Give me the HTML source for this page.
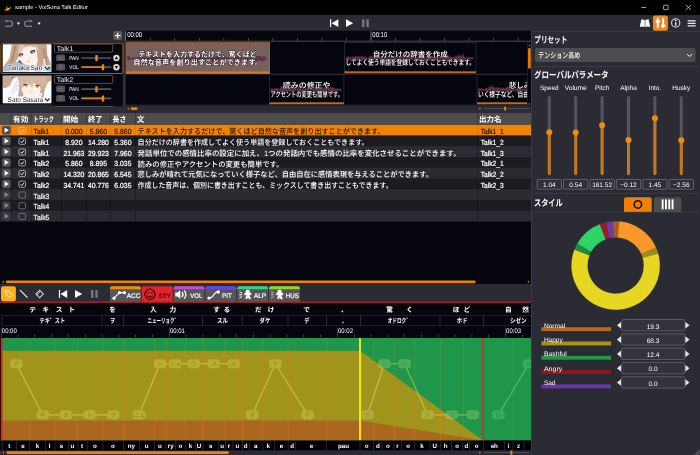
<!DOCTYPE html>
<html lang="ja"><head><meta charset="utf-8"><title>sample - VoiSona Talk Editor</title>
<style>
html,body{margin:0;padding:0;background:#000;overflow:hidden}
svg{display:block;font-family:'Liberation Sans', 'Noto Sans CJK JP', sans-serif;will-change:transform}
text{white-space:pre;text-rendering:geometricPrecision}
</style></head><body>
<svg width="700" height="455" viewBox="0 0 700 455">
<rect x="0" y="0" width="700" height="455" fill="#2a2b33"/>
<rect x="0" y="0" width="700" height="15" fill="#000"/>
<defs><linearGradient id="lg1" x1="0" y1="0" x2="0" y2="1"><stop offset="0" stop-color="#e6c21e"/><stop offset="0.55" stop-color="#f0a012"/><stop offset="1" stop-color="#ee7a0c"/></linearGradient></defs>
<path d="M8 3.9 C6.5 5.2 6.7 6.5 7.4 7.4 C7.9 8 8.5 8 9.1 7.7 L11.8 7 L10 8.7 C9.4 9.8 8.2 10.7 6.5 10.7 C5.5 10.7 4.7 10 4.8 8.9 C5.6 9.4 6.5 9.1 6.8 8.3 C6.1 7 6.2 5.3 8 3.9 Z" fill="url(#lg1)"/>
<text x="15" y="9.4" font-size="5.7" fill="#fff" textLength="73" lengthAdjust="spacingAndGlyphs">sample - VoiSona Talk Editor</text>
<line x1="641.4" y1="7.5" x2="646" y2="7.5" stroke="#e8e8e8" stroke-width="0.7"/>
<rect x="663.6" y="5.2" width="4.5" height="4.5" fill="none" rx="0.6" stroke="#e8e8e8" stroke-width="0.7"/>
<line x1="685.8" y1="5" x2="691" y2="9.8" stroke="#e8e8e8" stroke-width="0.7"/>
<line x1="691" y1="5" x2="685.8" y2="9.8" stroke="#e8e8e8" stroke-width="0.7"/>
<path d="M6.5 21 H9.8 A2.7 2.7 0 0 1 9.8 26.4 H5" fill="none" stroke="#80808a" stroke-width="1.2"/>
<polygon points="4.3,21 7.2,19.4 7.2,22.6" fill="#80808a"/>
<polygon points="16.8,22.6 20,22.6 18.4,25" fill="#f0f0f0"/>
<path d="M30.6 21 H27.3 A2.7 2.7 0 0 0 27.3 26.4 H32.1" fill="none" stroke="#80808a" stroke-width="1.2"/>
<polygon points="32.8,21 29.9,19.4 29.9,22.6" fill="#80808a"/>
<polygon points="37.5,22.6 40.7,22.6 39.1,25" fill="#f0f0f0"/>
<rect x="330" y="19.3" width="1.2" height="7.7" fill="#fff"/>
<polygon points="338.3,19.3 338.3,27 331.6,23.15" fill="#fff"/>
<polygon points="346,19.3 346,27 353.2,23.15" fill="#fff"/>
<rect x="362.1" y="19.3" width="2.4" height="7.7" fill="#77777d"/>
<rect x="366.4" y="19.3" width="2.4" height="7.7" fill="#77777d"/>
<path d="M639.8 26.9 L641.3 19.6 Q643.5 19.2 644.7 20 L644.7 27 Q642.5 26.2 639.8 26.9 Z" fill="#fff"/>
<path d="M650.2 26.9 L648.7 19.6 Q646.5 19.2 645.3 20 L645.3 27 Q647.5 26.2 650.2 26.9 Z" fill="#fff"/>
<rect x="652.9" y="15.4" width="15" height="15.3" fill="#ee8a1e" rx="2"/>
<rect x="656.9" y="18" width="1.9" height="9.9" fill="#fff"/>
<rect x="662.2" y="18" width="1.9" height="9.9" fill="#fff"/>
<rect x="655.7" y="20.3" width="4.3" height="2.4" fill="#fff" rx="1"/>
<rect x="661" y="24.5" width="4.3" height="2.4" fill="#fff" rx="1"/>
<circle cx="675.7" cy="22.9" r="4.1" fill="none" stroke="#fff" stroke-width="0.9"/>
<rect x="675.15" y="22.2" width="1.2" height="3.6" fill="#fff"/>
<circle cx="675.75" cy="20.6" r="0.8" fill="#fff"/>
<rect x="687.6" y="20.2" width="8" height="1.3" fill="#e6e6e6"/>
<rect x="687.6" y="22.7" width="8" height="1.3" fill="#e6e6e6"/>
<rect x="687.6" y="25.2" width="8" height="1.3" fill="#e6e6e6"/>
<rect x="113.3" y="31" width="8.8" height="9" fill="#5b5b5f" rx="2"/>
<rect x="114.9" y="35" width="5.6" height="1.1" fill="#fff"/>
<rect x="117.15" y="32.7" width="1.1" height="5.6" fill="#fff"/>
<rect x="125.7" y="30.7" width="405.3" height="10" fill="#05050e"/>
<rect x="125.7" y="40.7" width="405.3" height="1.3" fill="#34343b"/>
<rect x="125.3" y="31.2" width="0.8" height="9.5" fill="#8a8a90"/>
<rect x="149.88" y="38.2" width="0.7" height="2.5" fill="#6d6d74"/>
<rect x="174.41" y="38.2" width="0.7" height="2.5" fill="#6d6d74"/>
<rect x="198.94" y="38.2" width="0.7" height="2.5" fill="#6d6d74"/>
<rect x="223.47" y="38.2" width="0.7" height="2.5" fill="#6d6d74"/>
<rect x="248" y="38.2" width="0.7" height="2.5" fill="#6d6d74"/>
<rect x="272.53" y="38.2" width="0.7" height="2.5" fill="#6d6d74"/>
<rect x="297.06" y="38.2" width="0.7" height="2.5" fill="#6d6d74"/>
<rect x="321.59" y="38.2" width="0.7" height="2.5" fill="#6d6d74"/>
<rect x="346.12" y="38.2" width="0.7" height="2.5" fill="#6d6d74"/>
<rect x="370.6" y="31.2" width="0.8" height="9.5" fill="#8a8a90"/>
<rect x="395.18" y="38.2" width="0.7" height="2.5" fill="#6d6d74"/>
<rect x="419.71" y="38.2" width="0.7" height="2.5" fill="#6d6d74"/>
<rect x="444.24" y="38.2" width="0.7" height="2.5" fill="#6d6d74"/>
<rect x="468.77" y="38.2" width="0.7" height="2.5" fill="#6d6d74"/>
<rect x="493.3" y="38.2" width="0.7" height="2.5" fill="#6d6d74"/>
<rect x="517.83" y="38.2" width="0.7" height="2.5" fill="#6d6d74"/>
<text x="127.2" y="37.2" font-size="7.2" fill="#fff" textLength="15" lengthAdjust="spacingAndGlyphs">00:00</text>
<text x="372.3" y="37.2" font-size="7.2" fill="#fff" textLength="15" lengthAdjust="spacingAndGlyphs">00:10</text>
<rect x="0" y="42.3" width="123" height="62.1" fill="#07070f"/>
<rect x="52.6" y="104.4" width="70.4" height="1.8" fill="#07070f"/>
<rect x="123" y="42" width="2.7" height="64.4" fill="#30313a"/>
<rect x="125.7" y="42" width="405.3" height="63.5" fill="#05050e"/>
<rect x="125.7" y="73.6" width="401.5" height="0.9" fill="#2c2c34"/>
<rect x="125.7" y="104.6" width="401.5" height="0.9" fill="#2c2c34"/>
<rect x="527" y="42" width="0.7" height="63" fill="#2c2c34"/>
<defs><clipPath id="tlclip"><rect x="125.7" y="42" width="401.4" height="63.5"/></clipPath></defs>
<g clip-path="url(#tlclip)">
<rect x="125.7" y="42.7" width="143.75" height="30.8" fill="#78605b"/>
<path d="M127.7 56.47 V60.36 M128.5 56.2 V60.65 M129.3 56.56 V60.06 M130.1 57.06 V59.78 M130.9 57.81 V59.27 M131.7 58.03 V59.13 M132.5 57.65 V59.31 M133.3 57.49 V59.53 M134.1 57.7 V59.58 M134.9 57.43 V59.7 M135.7 57.39 V59.6 M136.5 57.3 V59.69 M137.3 57.72 V59.34 M138.1 57.65 V59.43 M138.9 56.72 V60.29 M139.7 57.15 V59.78 M140.5 57.61 V59.39 M141.3 56.79 V60.12 M142.1 56.96 V59.88 M142.9 57.28 V59.56 M143.7 56.85 V60.01 M144.5 56.78 V59.94 M145.3 56.7 V60.15 M146.1 56.95 V59.86 M146.9 57.11 V59.99 M147.7 57.73 V59.31 M148.5 57.31 V59.95 M149.3 56.69 V60.11 M150.1 55.6 V61.14 M150.9 56.73 V60.12 M151.7 56.4 V60.85 M152.5 57.32 V59.98 M153.3 56.65 V60.74 M154.1 57.38 V59.55 M154.9 57.41 V59.49 M155.7 56.89 V60.65 M156.5 56.28 V60.41 M157.3 56.16 V60.65 M158.1 57.15 V59.83 M158.9 57.56 V59.37 M159.7 57.94 V59.19 M160.5 58.01 V58.96 M161.3 57.1 V59.52 M162.1 57.46 V59.8 M162.9 56.67 V60.25 M163.7 56.8 V60.25 M164.5 57.66 V59.29 M165.3 58.04 V58.85 M166.1 57.88 V59.14 M166.9 57.32 V59.93 M167.7 56.85 V59.9 M168.5 57.23 V60.05 M169.3 56.61 V60.35 M170.1 57.32 V59.49 M170.9 57.47 V59.87 M171.7 55.74 V60.84 M172.5 56.02 V60.66 M173.3 56.61 V60.28 M174.1 56.84 V60 M174.9 56.56 V60.31 M175.7 56.91 V59.68 M176.5 57.06 V59.96 M177.3 56.66 V60.49 M178.1 56.23 V60.52 M178.9 57.47 V59.73 M179.7 57.55 V59.3 M180.5 57.21 V59.54 M181.3 58.09 V58.86 M182.1 58.14 V58.85 M182.9 58 V59.06 M183.7 57.88 V59.06 M184.5 56.98 V60.02 M185.3 57.77 V59.35 M186.1 56.97 V60.11 M186.9 57.04 V60.12 M187.7 56.98 V59.93 M188.5 56.11 V60.5 M189.3 55.25 V62.08 M190.1 56.06 V60.96 M190.9 55.91 V61.13 M191.7 56.68 V60.47 M192.5 56.57 V60.19 M193.3 57.76 V59.19 M194.1 57.04 V59.97 M194.9 56.47 V60.92 M195.7 56.02 V60.43 M196.5 55.98 V60.44 M197.3 55.92 V61.7 M198.1 55.4 V61.11 M198.9 56.86 V60.37 M199.7 56.14 V60.31 M200.5 55.88 V61.44 M201.3 55.38 V61.73 M202.1 56.04 V60.92 M202.9 57.48 V59.42 M203.7 57.29 V59.55 M204.5 57.76 V59.2 M205.3 57.18 V59.97 M206.1 57.14 V59.83 M206.9 57.48 V59.79 M207.7 57.21 V59.56 M208.5 57.68 V59.32 M209.3 57.63 V59.25 M210.1 57.03 V59.78 M210.9 57.12 V59.86 M211.7 55.49 V61.78 M212.5 55.16 V62.17 M213.3 55.7 V61.51 M214.1 55.12 V61.89 M214.9 56.53 V60.07 M215.7 56.83 V60.39 M216.5 56.21 V60.87 M217.3 55.84 V61.3 M218.1 55.89 V61.14 M218.9 55.77 V61.27 M219.7 56.13 V60.55 M220.5 57.65 V59.47 M221.3 57.74 V59.45 M222.1 57.43 V59.63 M222.9 57.56 V59.23 M223.7 56.52 V60.36 M224.5 57.21 V59.81 M225.3 57.43 V59.59 M226.1 57.02 V59.85 M226.9 56.87 V59.84 M227.7 57.12 V59.75 M228.5 57.38 V59.97 M229.3 56.49 V60.91 M230.1 57.04 V60.07 M230.9 56.98 V59.65 M231.7 56.94 V59.82 M232.5 55.67 V61.55 M233.3 56.62 V60.57 M234.1 56.42 V60.34 M234.9 56 V61.02 M235.7 56.52 V60.45 M236.5 56.14 V60.71 M237.3 56.67 V60.21 M238.1 55.82 V61.86 M238.9 55.37 V61.44 M239.7 55.63 V61.79 M240.5 56.5 V60.64 M241.3 57.12 V59.62 M242.1 57.53 V59.42 M242.9 57.86 V59.12 M243.7 57.27 V59.62 M244.5 57.13 V60.04 M245.3 54.92 V62.02 M246.1 54.97 V61.47 M246.9 55.75 V61.59 M247.7 56.86 V60.05 M248.5 57.9 V59.06 M249.3 58.27 V58.73 M250.1 57.85 V59.09 M250.9 56.87 V60.06 M251.7 56.56 V60.37 M252.5 56.18 V60.65 M253.3 56.57 V60.62 M254.1 55.66 V61.27 M254.9 55.3 V61.43 M255.7 56.06 V61.07 M256.5 55.92 V61.79 M257.3 55.84 V60.76 M258.1 55.87 V60.86 M258.9 56.65 V59.96 M259.7 55.93 V60.87 M260.5 56.11 V60.82 M261.3 56.74 V60.73 M262.1 56.76 V60.78 M262.9 56.25 V60.87 M263.7 56.35 V61.07 M264.5 56.25 V60.36 M265.3 57.13 V60.04 M266.1 57.62 V59.4" fill="none" stroke="#55294c" stroke-width="0.8"/>
<rect x="125.7" y="42.7" width="143.75" height="30.8" fill="none" stroke="#b8702a" stroke-width="0.8"/>
<rect x="125.7" y="71.5" width="143.75" height="2" fill="#e07a18"/>
<text x="197.57" y="56.9" font-size="7.5" fill="#fff" font-weight="700" textLength="118.5" lengthAdjust="spacingAndGlyphs" stroke="#120a10" stroke-width="0.9" stroke-linejoin="round" paint-order="stroke" text-anchor="middle">テキストを入力するだけで、驚くほど</text>
<text x="197.57" y="65.3" font-size="7.5" fill="#fff" font-weight="700" textLength="128.5" lengthAdjust="spacingAndGlyphs" stroke="#120a10" stroke-width="0.9" stroke-linejoin="round" paint-order="stroke" text-anchor="middle">自然な音声を創り出すことができます。</text>
<rect x="344.51" y="42.7" width="131.48" height="30.8" fill="#04040c" stroke="#2e2e36" stroke-width="0.8"/>
<path d="M346.01 57.24 V59.47 M346.81 56.97 V59.9 M347.61 56.79 V59.94 M348.41 56.41 V60.2 M349.21 57.13 V59.64 M350.01 56.59 V60.61 M350.81 57.46 V59.22 M351.61 57.29 V59.25 M352.41 56.66 V59.81 M353.21 56.86 V59.72 M354.01 56.62 V60.43 M354.81 56.96 V59.55 M355.61 55.9 V61.65 M356.41 56.84 V60.29 M357.21 56.52 V60.66 M358.01 56.3 V61.33 M358.81 56.96 V60.03 M359.61 56.28 V60.09 M360.41 57.45 V59.52 M361.21 56.2 V60.72 M362.01 55.72 V60.95 M362.81 56.52 V60.6 M363.61 56.88 V60.14 M364.41 56.39 V60.78 M365.21 57.08 V59.55 M366.01 57.13 V59.84 M366.81 57.88 V59.04 M367.61 57.75 V59.04 M368.41 57.46 V59.55 M369.21 56.19 V60.58 M370.01 55.74 V61.29 M370.81 56.56 V60.26 M371.61 55.74 V60.67 M372.41 56.81 V59.7 M373.21 57.62 V59.1 M374.01 56.99 V59.74 M374.81 57.39 V59.41 M375.61 56.85 V59.87 M376.41 56.88 V60.34 M377.21 56.3 V60.29 M378.01 57.08 V59.48 M378.81 57.39 V59.29 M379.61 57.71 V58.99 M380.41 57.16 V59.52 M381.21 57.29 V59.3 M382.01 57.67 V58.99 M382.81 57.34 V59.4 M383.61 57.56 V59.23 M384.41 57.01 V60 M385.21 57.34 V59.5 M386.01 56.45 V60.9 M386.81 57.11 V59.61 M387.61 56.84 V59.78 M388.41 57.63 V59.15 M389.21 57.1 V59.84 M390.01 57.63 V59.38 M390.81 56.97 V59.73 M391.61 57.26 V59.68 M392.41 57.28 V59.5 M393.21 56.59 V60.28 M394.01 57.13 V59.64 M394.81 57.13 V59.75 M395.61 56.2 V60.38 M396.41 56.35 V60.67 M397.21 55.91 V61.17 M398.01 57.2 V60 M398.81 55.52 V60.78 M399.61 57.02 V60.01 M400.41 56.04 V60.84 M401.21 56.58 V60.48 M402.01 55.47 V61.84 M402.81 55.16 V62.44 M403.61 55.21 V61.27 M404.41 54.01 V62.5 M405.21 56.54 V59.98 M406.01 55.73 V60.48 M406.81 56.12 V60.62 M407.61 55.15 V61.42 M408.41 55.77 V60.53 M409.21 55.93 V60.95 M410.01 56.69 V60.38 M410.81 57.4 V59.5 M411.61 57.53 V59.44 M412.41 56.81 V59.87 M413.21 56.98 V60.38 M414.01 56.64 V60.34 M414.81 56.88 V60.37 M415.61 56.79 V60.36 M416.41 56.58 V60.66 M417.21 56.66 V60.03 M418.01 56.22 V60.51 M418.81 55.85 V60.26 M419.61 56.62 V60.4 M420.41 55.04 V61.47 M421.21 55.73 V61 M422.01 56.61 V60.23 M422.81 56.57 V60.66 M423.61 56.09 V60.94 M424.41 55.18 V60.89 M425.21 56.55 V60.31 M426.01 56.53 V60.7 M426.81 55.1 V61.91 M427.61 56.37 V60.74 M428.41 56.71 V59.99 M429.21 56.7 V59.66 M430.01 56.45 V60.6 M430.81 55.63 V60.93 M431.61 55.74 V61.65 M432.41 56.04 V61.02 M433.21 55.38 V61.09 M434.01 56.86 V59.82 M434.81 56.98 V59.45 M435.61 56.52 V60.27 M436.41 56.71 V60.36 M437.21 56.35 V60.34 M438.01 54.14 V62.03 M438.81 55.32 V60.91 M439.61 57.32 V59.46 M440.41 56.37 V60.42 M441.21 55.77 V61.62 M442.01 55.64 V61.59 M442.81 55.94 V60.9 M443.61 56.23 V60.75 M444.41 56.39 V60.49 M445.21 55.51 V61.5 M446.01 56.32 V60.51 M446.81 56.14 V60.47 M447.61 55.01 V61.95 M448.41 55.51 V62.18 M449.21 57.09 V59.89 M450.01 56.58 V60.2 M450.81 56.84 V60.02 M451.61 56.98 V59.62 M452.41 56.83 V59.71 M453.21 56.78 V59.61 M454.01 57.21 V59.61 M454.81 56.47 V60.4 M455.61 56.47 V60.61 M456.41 55.96 V61.19 M457.21 56.63 V60.68 M458.01 55.29 V60.87 M458.81 55.22 V61.07 M459.61 55.34 V61.23 M460.41 55.72 V61.17 M461.21 56.3 V60.91 M462.01 55.42 V61.33 M462.81 53.59 V63 M463.61 55.75 V61.16 M464.41 57.11 V60.16 M465.21 57.11 V59.59 M466.01 57.39 V59.51 M466.81 57.43 V59.41 M467.61 57.5 V59.29 M468.41 57.15 V60.11 M469.21 57.1 V60.16 M470.01 57.29 V59.55 M470.81 57.43 V59.21 M471.61 57.34 V59.43 M472.41 57.3 V59.57 M473.21 57.81 V58.91" fill="none" stroke="#7a3d5a" stroke-width="0.8"/>
<rect x="344.51" y="71.3" width="131.48" height="1.8" fill="#c9641c"/>
<text x="410.25" y="56.9" font-size="7.5" fill="#fff" font-weight="500" textLength="75" lengthAdjust="spacingAndGlyphs" stroke="#120a10" stroke-width="0.9" stroke-linejoin="round" paint-order="stroke" text-anchor="middle">自分だけの辞書を作成</text>
<text x="410.25" y="65.3" font-size="7.5" fill="#fff" font-weight="500" textLength="129.48" lengthAdjust="spacingAndGlyphs" stroke="#120a10" stroke-width="0.9" stroke-linejoin="round" paint-order="stroke" text-anchor="middle">してよく使う単語を登録しておくこともできます。</text>
<rect x="664.45" y="42.7" width="195.26" height="30.8" fill="#04040c" stroke="#2e2e36" stroke-width="0.8"/>
<path d="M665.95 55.6 V61.15 M666.75 55.48 V61.64 M667.55 55.87 V61.19 M668.35 56.66 V60.58 M669.15 56.35 V60.07 M669.95 56.87 V59.63 M670.75 56.69 V59.78 M671.55 56.53 V60.42 M672.35 56.6 V60.22 M673.15 57.34 V59.73 M673.95 56.01 V60.98 M674.75 56.58 V60.25 M675.55 57.08 V59.83 M676.35 57.29 V59.67 M677.15 57.15 V59.72 M677.95 56.33 V60.95 M678.75 56.3 V60.71 M679.55 55.91 V61.11 M680.35 56.76 V59.83 M681.15 57 V59.9 M681.95 56.27 V60.24 M682.75 56.95 V60.09 M683.55 56.29 V60.54 M684.35 56.47 V60.72 M685.15 54.92 V61.37 M685.95 56.57 V60.58 M686.75 56.46 V60.39 M687.55 56.49 V60.67 M688.35 57.38 V59.82 M689.15 56.53 V59.96 M689.95 56.63 V59.78 M690.75 56.72 V59.99 M691.55 57.24 V59.59 M692.35 57.68 V59.28 M693.15 57.64 V58.98 M693.95 56.94 V59.97 M694.75 56.46 V60.15 M695.55 57.49 V59.14 M696.35 57.43 V59.33 M697.15 57.63 V59.09 M697.95 57.96 V58.94 M698.75 57.44 V59.23 M699.55 57.44 V59.46 M700.35 57.19 V59.67 M701.15 56.34 V59.92 M701.95 56.78 V59.61 M702.75 57.66 V59.22 M703.55 57.81 V59.05 M704.35 57.92 V58.89 M705.15 57.6 V59.5 M705.95 56.46 V60.67 M706.75 56.58 V60.24 M707.55 55.35 V61.22 M708.35 56.29 V60.35 M709.15 55.02 V61.4 M709.95 56.66 V60.28 M710.75 55.34 V61.07 M711.55 55.64 V60.98 M712.35 56.7 V60.23 M713.15 56.44 V60.21 M713.95 56.85 V60.04 M714.75 57.26 V59.54 M715.55 56.17 V60.25 M716.35 56.65 V59.86 M717.15 57.42 V59.66 M717.95 55.99 V60.74 M718.75 55.57 V61.07 M719.55 56.86 V59.64 M720.35 57.2 V59.32 M721.15 57.93 V59.02 M721.95 58.17 V58.71 M722.75 57.99 V58.78 M723.55 57.28 V59.39 M724.35 57.31 V59.83 M725.15 56.94 V59.57 M725.95 56.25 V59.98 M726.75 56.91 V60.02 M727.55 57.23 V59.6 M728.35 56.65 V59.94 M729.15 57.35 V59.43 M729.95 57.23 V59.77 M730.75 55.78 V61.34 M731.55 56.78 V60.06 M732.35 56.58 V60.2 M733.15 57.22 V59.31 M733.95 57.89 V58.94 M734.75 57.44 V59.45 M735.55 57.51 V59.26 M736.35 56.86 V59.89 M737.15 56.07 V60.26 M737.95 56.33 V60.8 M738.75 56.63 V60.13 M739.55 57.36 V59.4 M740.35 57.41 V59.38 M741.15 57.05 V60.21 M741.95 56.75 V59.98 M742.75 55.92 V60.67 M743.55 56.6 V60.28 M744.35 57 V59.9 M745.15 57.46 V59.34 M745.95 56.67 V60.29 M746.75 56.42 V60.34 M747.55 56.95 V60.15 M748.35 55.23 V60.94 M749.15 55.72 V61.2 M749.95 56.21 V60.6 M750.75 56.08 V60.78 M751.55 56.25 V60.07 M752.35 56.59 V60.24 M753.15 56.61 V60.42 M753.95 56.32 V60.17 M754.75 56.54 V59.92 M755.55 55.57 V60.52 M756.35 56.32 V60.79 M757.15 56.93 V60.08 M757.95 56.52 V59.96 M758.75 55.52 V61.03 M759.55 56.13 V61.03 M760.35 55.68 V61.09 M761.15 55.74 V61.55 M761.95 55.88 V61.63 M762.75 56.36 V61.11 M763.55 57.34 V59.61 M764.35 56.49 V60.37 M765.15 56.55 V60.15 M765.95 56.75 V60.07 M766.75 55.69 V60.77 M767.55 56.48 V60.67 M768.35 56.88 V59.78 M769.15 55.98 V60.8 M769.95 56.68 V60.26 M770.75 56 V60.24 M771.55 56.38 V60.43 M772.35 54.59 V61.54 M773.15 56.5 V60.53 M773.95 55.78 V60.89 M774.75 57.5 V59.23 M775.55 57.65 V59.05 M776.35 57.43 V59.14 M777.15 55.7 V61.15 M777.95 55.97 V60.86 M778.75 54.85 V61.64 M779.55 56.25 V60.3 M780.35 56.75 V59.66 M781.15 56.28 V60.4 M781.95 56.18 V60.41 M782.75 56.1 V61.15 M783.55 55.14 V61.8 M784.35 53.72 V61.99 M785.15 54.77 V61.33 M785.95 56.43 V60.25 M786.75 56.15 V60.23 M787.55 55.36 V60.88 M788.35 55.23 V61.92 M789.15 55.95 V60.53 M789.95 56.74 V60.03 M790.75 57.85 V58.9 M791.55 58.18 V58.62 M792.35 58.15 V58.69 M793.15 57.91 V58.87 M793.95 57.62 V59.23 M794.75 57.11 V59.58 M795.55 56.48 V60.09 M796.35 57.14 V59.69 M797.15 57.65 V59.22 M797.95 57.4 V59.53 M798.75 57.37 V59.41 M799.55 56.7 V60 M800.35 56.81 V60.2 M801.15 56.85 V60.23 M801.95 55.71 V60.51 M802.75 56.35 V60.18 M803.55 56.2 V60.5 M804.35 56.38 V60.79 M805.15 56.29 V60.45 M805.95 55.17 V62.26 M806.75 55.07 V61.09 M807.55 56.39 V60.83 M808.35 56.06 V60.52 M809.15 56.12 V60.42 M809.95 57.29 V59.54 M810.75 56.68 V60.13 M811.55 54.75 V61.26 M812.35 55.13 V62.05 M813.15 55.87 V60.23 M813.95 57.58 V59.31 M814.75 58.14 V58.72 M815.55 58.15 V58.65 M816.35 57.92 V58.77 M817.15 57.6 V59.22 M817.95 56.89 V59.65 M818.75 56.77 V60.38 M819.55 56.39 V60.33 M820.35 56.07 V60.81 M821.15 56.94 V59.69 M821.95 56.5 V60.66 M822.75 55.52 V60.72 M823.55 56.2 V60.47 M824.35 54.75 V61.57 M825.15 55.01 V61.35 M825.95 56.73 V60.29 M826.75 56.25 V60.95 M827.55 57.51 V59.5 M828.35 57.64 V59.19 M829.15 57.12 V59.43 M829.95 57.11 V59.4 M830.75 56.87 V60.13 M831.55 56.74 V59.92 M832.35 57.65 V59.12 M833.15 56.83 V59.92 M833.95 56.17 V61.25 M834.75 56.9 V59.77 M835.55 55.14 V61.69 M836.35 54.75 V61.45 M837.15 55.5 V60.95 M837.95 54.97 V62.09 M838.75 56.49 V60.26 M839.55 56.31 V60.72 M840.35 56.84 V60.27 M841.15 56.01 V60.99 M841.95 56.25 V60.66 M842.75 55.53 V61.37 M843.55 57.11 V59.66 M844.35 55.74 V61.19 M845.15 56.18 V60.86 M845.95 57.17 V59.87 M846.75 56.75 V59.82 M847.55 56.74 V60.41 M848.35 56.42 V60.87 M849.15 57.34 V59.73 M849.95 57.19 V59.67 M850.75 57.62 V59.06 M851.55 57.51 V59.42 M852.35 57.13 V59.58 M853.15 57.41 V59.27 M853.95 57.5 V59.29 M854.75 56.91 V59.84 M855.55 57.85 V58.99 M856.35 57.95 V58.86 M857.15 58.03 V58.71" fill="none" stroke="#7a3d5a" stroke-width="0.8"/>
<rect x="664.45" y="71.3" width="195.26" height="1.8" fill="#c9641c"/>
<text x="762.08" y="56.9" font-size="7.5" fill="#fff" font-weight="500" textLength="128" lengthAdjust="spacingAndGlyphs" stroke="#120a10" stroke-width="0.9" stroke-linejoin="round" paint-order="stroke" text-anchor="middle">発話単位での感情比率の設定に加え、</text>
<text x="762.08" y="65.3" font-size="7.5" fill="#fff" font-weight="500" textLength="193.26" lengthAdjust="spacingAndGlyphs" stroke="#120a10" stroke-width="0.9" stroke-linejoin="round" paint-order="stroke" text-anchor="middle">1つの発話内でも感情の比率を変化させることができます。</text>
<rect x="269.45" y="74.5" width="74.45" height="30" fill="#04040c" stroke="#2e2e36" stroke-width="0.8"/>
<path d="M270.95 88.21 V91.34 M271.75 88.45 V91.02 M272.55 88.65 V90.67 M273.35 89.08 V90.43 M274.15 88.77 V90.78 M274.95 88.26 V91.47 M275.75 88.64 V90.82 M276.55 88.34 V91.06 M277.35 88.05 V91.12 M278.15 89 V90.76 M278.95 88.72 V90.92 M279.75 88.84 V90.61 M280.55 87.38 V92.26 M281.35 86.53 V92.14 M282.15 87.07 V92.37 M282.95 86.64 V92.65 M283.75 86.59 V92.88 M284.55 87.81 V91.99 M285.35 87.46 V91.85 M286.15 88.73 V91.13 M286.95 87.74 V91.71 M287.75 86.16 V93.15 M288.55 88.41 V91.26 M289.35 87.98 V91.54 M290.15 88.56 V91.4 M290.95 88.43 V91.29 M291.75 87.21 V92 M292.55 87.73 V91.59 M293.35 87.52 V92.64 M294.15 86.81 V92.29 M294.95 88.38 V91.2 M295.75 88.55 V90.76 M296.55 89.12 V90.4 M297.35 88.15 V91.75 M298.15 87.29 V92.28 M298.95 87.58 V92.13 M299.75 86 V93.63 M300.55 87.94 V91.75 M301.35 88.3 V91.16 M302.15 88.94 V90.54 M302.95 88.38 V90.84 M303.75 88.02 V91.43 M304.55 88.83 V90.54 M305.35 87.76 V91.43 M306.15 88.65 V90.92 M306.95 87.85 V91.33 M307.75 88.85 V90.48 M308.55 88.49 V91.48 M309.35 87.86 V91.54 M310.15 87.97 V91.97 M310.95 88.13 V91.41 M311.75 88.14 V91.17 M312.55 88.74 V90.82 M313.35 87.94 V91.36 M314.15 88.4 V91.09 M314.95 88.5 V91.1 M315.75 88.28 V91.23 M316.55 87.15 V92.37 M317.35 87.19 V91.72 M318.15 88.33 V91.4 M318.95 88.04 V91.83 M319.75 87.44 V92.96 M320.55 87.98 V91.99 M321.35 87.29 V91.8 M322.15 87.57 V92.01 M322.95 88.51 V91.19 M323.75 87.35 V91.68 M324.55 87.94 V91.62 M325.35 86.94 V92.25 M326.15 87.35 V91.87 M326.95 85.87 V93.3 M327.75 86.6 V92.68 M328.55 86.55 V93.56 M329.35 87.71 V91.84 M330.15 87.28 V92.04 M330.95 86.68 V93.26 M331.75 88.05 V91.59 M332.55 86.84 V93.62 M333.35 87.62 V91.81 M334.15 88.06 V91.77 M334.95 88.21 V91.69 M335.75 88.85 V90.65 M336.55 88.88 V90.68 M337.35 88.11 V91.57 M338.15 88.91 V90.66 M338.95 88.54 V90.99 M339.75 88.79 V91.03 M340.55 88.96 V90.6 M341.35 89.21 V90.52" fill="none" stroke="#7a3d5a" stroke-width="0.8"/>
<rect x="269.45" y="102.3" width="74.45" height="1.8" fill="#c9641c"/>
<text x="306.67" y="88.3" font-size="7.5" fill="#fff" font-weight="500" textLength="47.6" lengthAdjust="spacingAndGlyphs" stroke="#120a10" stroke-width="0.9" stroke-linejoin="round" paint-order="stroke" text-anchor="middle">読みの修正や</text>
<text x="306.67" y="96.7" font-size="7.5" fill="#fff" font-weight="500" textLength="72.45" lengthAdjust="spacingAndGlyphs" stroke="#120a10" stroke-width="0.9" stroke-linejoin="round" paint-order="stroke" text-anchor="middle">アクセントの変更も簡単です。</text>
<rect x="476.97" y="74.5" width="160.55" height="30" fill="#04040c" stroke="#2e2e36" stroke-width="0.8"/>
<path d="M478.47 88.99 V90.7 M479.27 88.03 V91.95 M480.07 88.36 V91.25 M480.87 88.86 V90.77 M481.67 88.02 V91.13 M482.47 88.94 V90.54 M483.27 89.07 V90.63 M484.07 89.03 V90.56 M484.87 88.99 V90.39 M485.67 88.2 V91.04 M486.47 87.78 V91.62 M487.27 88.49 V91.29 M488.07 88.44 V90.93 M488.87 87.44 V92.05 M489.67 86.49 V93.15 M490.47 86.54 V92.84 M491.27 87.37 V92.45 M492.07 84.95 V94.16 M492.87 87.03 V92.31 M493.67 87.36 V92.31 M494.47 87.51 V92.09 M495.27 87.47 V92.2 M496.07 88.36 V91.04 M496.87 87.46 V92.08 M497.67 87.09 V92.27 M498.47 87.48 V92.65 M499.27 88.19 V91.3 M500.07 88.45 V91.22 M500.87 88.6 V91.04 M501.67 88.02 V91.91 M502.47 87.57 V92.24 M503.27 87.56 V92.04 M504.07 88.5 V91.14 M504.87 88.37 V91.24 M505.67 88.04 V91.99 M506.47 87.39 V92.01 M507.27 86.74 V92.73 M508.07 87.03 V92.73 M508.87 86.79 V92.38 M509.67 86.27 V92.63 M510.47 87.38 V92.06 M511.27 88.19 V91.33 M512.07 88.42 V91.43 M512.87 87.96 V91.62 M513.67 88.61 V90.66 M514.47 89.1 V90.53 M515.27 88.89 V90.58 M516.07 88.77 V90.65 M516.87 87.94 V91.82 M517.67 86.49 V92.69 M518.47 86.69 V92.63 M519.27 87.97 V91.61 M520.07 86.19 V93.02 M520.87 87.74 V91.29 M521.67 88.58 V91.04 M522.47 88.8 V90.89 M523.27 88.96 V90.58 M524.07 88.8 V90.62 M524.87 87.78 V91.62 M525.67 88.39 V91 M526.47 88.53 V91.39 M527.27 88.65 V91.04 M528.07 88.49 V91.03 M528.87 87.68 V91.95 M529.67 88.07 V91.38 M530.47 85.49 V93.36 M531.27 87.69 V92.61 M532.07 87.5 V91.99 M532.87 87.31 V92.4 M533.67 88.54 V90.87 M534.47 88.73 V90.86 M535.27 88.69 V90.87 M536.07 87.46 V91.7 M536.87 87.85 V92.07 M537.67 86.82 V92.23 M538.47 87.98 V91.72 M539.27 87.15 V92.31 M540.07 86.14 V93.46 M540.87 86.5 V93.23 M541.67 87.45 V92.9 M542.47 88.37 V91.15 M543.27 89.03 V90.39 M544.07 89.1 V90.49 M544.87 88.78 V91 M545.67 87.6 V92.15 M546.47 86.1 V93.35 M547.27 87.83 V91.94 M548.07 86.15 V92.67 M548.87 87.8 V92.13 M549.67 87.9 V91.34 M550.47 88.35 V90.91 M551.27 88.09 V91.36 M552.07 88.26 V91.38 M552.87 88.54 V91.05 M553.67 88.07 V91.61 M554.47 88.87 V90.69 M555.27 88.63 V91.15 M556.07 89.15 V90.63 M556.87 88.88 V90.68 M557.67 87.64 V92.01 M558.47 88.3 V91.15 M559.27 87.82 V91.52 M560.07 88.84 V90.89 M560.87 89.16 V90.43 M561.67 89.08 V90.38 M562.47 88.92 V90.58 M563.27 88.08 V91.42 M564.07 88.36 V91.66 M564.87 89 V90.86 M565.67 88.51 V91.03 M566.47 88.08 V91.61 M567.27 88.8 V90.71 M568.07 88.77 V90.94 M568.87 88.66 V90.84 M569.67 88.15 V91.54 M570.47 88.62 V90.86 M571.27 88.79 V90.87 M572.07 89.05 V90.53 M572.87 89.09 V90.76 M573.67 88.53 V90.76 M574.47 88.46 V91.03 M575.27 88.7 V90.75 M576.07 89.1 V90.56 M576.87 88.83 V90.55 M577.67 89.18 V90.4 M578.47 88.88 V90.81 M579.27 88.67 V90.74 M580.07 87.42 V92.17 M580.87 87.98 V91.16 M581.67 88.4 V91.4 M582.47 88.8 V90.82 M583.27 89.45 V90.13 M584.07 89.15 V90.33 M584.87 88.93 V90.61 M585.67 87.86 V91.39 M586.47 88.1 V91.65 M587.27 87.35 V92.73 M588.07 88.62 V91.34 M588.87 88.29 V91.63 M589.67 87.79 V91.69 M590.47 89.24 V90.55 M591.27 88.76 V90.56 M592.07 89.09 V90.61 M592.87 89.12 V90.52 M593.67 88.73 V90.86 M594.47 87.55 V92.34 M595.27 87.76 V91.52 M596.07 88.04 V91.88 M596.87 86.48 V93.41 M597.67 88.29 V91.64 M598.47 87.71 V91.75 M599.27 87.77 V91.95 M600.07 88.68 V91.07 M600.87 89.14 V90.51 M601.67 89.31 V90.3 M602.47 89 V90.58 M603.27 88.74 V91.01 M604.07 88.11 V91.37 M604.87 88.28 V91.42 M605.67 88.76 V90.74 M606.47 88.46 V91.36 M607.27 87.82 V91.63 M608.07 87.72 V91.79 M608.87 87.7 V92.11 M609.67 88.02 V91.33 M610.47 88.42 V91.05 M611.27 88.96 V90.67 M612.07 87.87 V91.56 M612.87 87.07 V92.03 M613.67 88.34 V91.39 M614.47 85.82 V93.37 M615.27 87.71 V91.84 M616.07 87.99 V92.05 M616.87 86.86 V92.14 M617.67 88.11 V91.85 M618.47 87.57 V91.93 M619.27 88.45 V91.46 M620.07 87.96 V91.65 M620.87 87.38 V91.92 M621.67 87.74 V91.52 M622.47 88.4 V91.02 M623.27 88.27 V91.68 M624.07 87.91 V91.4 M624.87 88.65 V90.92 M625.67 88.68 V91.08 M626.47 89.34 V90.24 M627.27 88.76 V90.84 M628.07 88.82 V90.69 M628.87 88.28 V91.07 M629.67 88.83 V91.01 M630.47 87.76 V92.33 M631.27 88.01 V91.7 M632.07 87.34 V91.93 M632.87 88.53 V91.11 M633.67 88.41 V91.15 M634.47 88.79 V90.84 M635.27 88.31 V91.14" fill="none" stroke="#7a3d5a" stroke-width="0.8"/>
<rect x="476.97" y="102.3" width="160.55" height="1.8" fill="#c9641c"/>
<text x="557.24" y="88.3" font-size="7.5" fill="#fff" font-weight="500" textLength="97" lengthAdjust="spacingAndGlyphs" stroke="#120a10" stroke-width="0.9" stroke-linejoin="round" paint-order="stroke" text-anchor="middle">悲しみが晴れて元気になって</text>
<text x="557.24" y="96.7" font-size="7.5" fill="#fff" font-weight="500" textLength="158.55" lengthAdjust="spacingAndGlyphs" stroke="#120a10" stroke-width="0.9" stroke-linejoin="round" paint-order="stroke" text-anchor="middle">いく様子など、自由自在に感情表現を与えることができます。</text>
</g>
<polygon points="528.4,46.2 530.4,46.2 529.4,44.6" fill="#ef8306"/>
<rect x="528.1" y="47.9" width="2.6" height="20.7" fill="#ef8306" rx="1.2"/>
<polygon points="528.4,103.6 530.4,103.6 529.4,105.2" fill="#ef8306"/>
<polygon points="128.9,107.6 128.9,109.8 127.2,108.7" fill="#ef8306"/>
<rect x="130.7" y="107.3" width="6.8" height="2.7" fill="#ef8306" rx="1.3"/>
<polygon points="479.3,107.6 479.3,109.8 481,108.7" fill="#ef8306"/>
<rect x="483.6" y="108.3" width="45.7" height="0.8" fill="#55565e"/>
<rect x="504.2" y="106.6" width="1.9" height="4.1" fill="#ef8306" rx="0.6"/>
<rect x="0.9" y="43.2" width="122" height="30.3" fill="none" rx="1.2" stroke="#b96a1c" stroke-width="0.9"/>
<rect x="2.8" y="44.5" width="48.4" height="27.6" fill="#fff"/>
<rect x="54.5" y="44.2" width="58.2" height="8" fill="#04040b" rx="0.8" stroke="#6a6a70" stroke-width="0.7"/>
<text x="56.8" y="50.6" font-size="6.9" fill="#f2f2f2" textLength="16.5" lengthAdjust="spacingAndGlyphs">Talk1</text>
<rect x="56.1" y="54.4" width="9" height="6.7" fill="#515156" rx="1.5"/>
<text x="60.6" y="59.5" font-size="5.6" fill="#7d7d82" text-anchor="middle">m</text>
<rect x="56.1" y="63.8" width="9" height="6.7" fill="#515156" rx="1.5"/>
<text x="60.6" y="69.2" font-size="5.6" fill="#7d7d82" text-anchor="middle">S</text>
<text x="69.3" y="59.8" font-size="5.5" fill="#fff" textLength="9.3" lengthAdjust="spacingAndGlyphs">PAN</text>
<text x="69.3" y="69.1" font-size="5.5" fill="#fff" textLength="9.3" lengthAdjust="spacingAndGlyphs">VOL</text>
<rect x="81.2" y="57.15" width="30.2" height="1.7" fill="#56575d" rx="0.8"/>
<rect x="95.3" y="55" width="2.4" height="6" fill="#f08a10" rx="0.5"/>
<rect x="81.2" y="66.35" width="30.2" height="1.7" fill="#56575d" rx="0.8"/>
<rect x="81.2" y="66.35" width="21.7" height="1.7" fill="#d97a16" rx="0.8"/>
<rect x="101.8" y="64.2" width="2.4" height="6" fill="#f08a10" rx="0.5"/>
<circle cx="116.4" cy="58" r="3.2" fill="#d8d8d8"/>
<polygon points="114.6,59.3 118.2,59.3 116.4,56.2" fill="#222"/>
<circle cx="116.4" cy="67.2" r="3.2" fill="#d8d8d8"/>
<polygon points="114.6,66 118.2,66 116.4,69.1" fill="#222"/>
<rect x="2.8" y="75.7" width="48.4" height="27.6" fill="#fff"/>
<rect x="54.5" y="75.4" width="58.2" height="8" fill="#04040b" rx="0.8" stroke="#6a6a70" stroke-width="0.7"/>
<text x="56.8" y="81.8" font-size="6.9" fill="#f2f2f2" textLength="16.5" lengthAdjust="spacingAndGlyphs">Talk2</text>
<rect x="56.1" y="85.6" width="9" height="6.7" fill="#515156" rx="1.5"/>
<text x="60.6" y="90.7" font-size="5.6" fill="#7d7d82" text-anchor="middle">m</text>
<rect x="56.1" y="95" width="9" height="6.7" fill="#515156" rx="1.5"/>
<text x="60.6" y="100.4" font-size="5.6" fill="#7d7d82" text-anchor="middle">S</text>
<text x="69.3" y="91" font-size="5.5" fill="#fff" textLength="9.3" lengthAdjust="spacingAndGlyphs">PAN</text>
<text x="69.3" y="100.3" font-size="5.5" fill="#fff" textLength="9.3" lengthAdjust="spacingAndGlyphs">VOL</text>
<rect x="81.2" y="88.35" width="30.2" height="1.7" fill="#56575d" rx="0.8"/>
<rect x="95.3" y="86.2" width="2.4" height="6" fill="#f08a10" rx="0.5"/>
<rect x="81.2" y="97.55" width="30.2" height="1.7" fill="#56575d" rx="0.8"/>
<rect x="81.2" y="97.55" width="21.7" height="1.7" fill="#d97a16" rx="0.8"/>
<rect x="101.8" y="95.4" width="2.4" height="6" fill="#f08a10" rx="0.5"/>
<rect x="54.5" y="106" width="58.6" height="0.8" fill="#5c5c63"/>
<defs><clipPath id="p1c"><rect x="12" y="8" width="678" height="378"/></clipPath><clipPath id="p2c"><rect x="12" y="10" width="678" height="376"/></clipPath><filter id="pb" x="-5%" y="-5%" width="110%" height="110%"><feGaussianBlur stdDeviation="6"/></filter></defs>
<g transform="translate(2 44) scale(0.0714286)" clip-path="url(#p1c)"><g filter="url(#pb)">
<rect x="0" y="0" width="700" height="400" fill="#ffffff"/>
<path d="M470 0 L625 0 L632 140 L690 300 L640 330 L560 300 L540 400 L455 400 L500 230 Z" fill="#c9a58e"/>
<path d="M560 60 L600 60 L640 290 L600 300 Z" fill="#b89078"/>
<path d="M575 210 L600 205 L615 300 L585 300 Z" fill="#f4ebe6"/>
<path d="M140 0 L260 0 L235 170 L150 330 L20 345 L12 330 L105 200 Z" fill="#c9a58e"/>
<path d="M175 20 L205 20 L150 250 L110 300 Z" fill="#b08a72"/>
<path d="M110 280 L250 235 L400 310 L380 400 L12 400 L12 350 Z" fill="#a9c2d2"/>
<path d="M245 225 L385 283 L370 312 L225 255 Z" fill="#565b66"/>
<path d="M560 300 L690 290 L690 400 L540 400 Z" fill="#c4e9f3"/>
<path d="M640 330 L690 320 L690 400 L650 400 Z" fill="#b4bcc4"/>
<ellipse cx="365" cy="165" rx="128" ry="140" fill="#fdeee6" transform="rotate(-22 365 165)"/>
<path d="M245 0 L490 0 L520 120 L470 50 L380 30 L300 60 L235 170 L225 90 Z" fill="#e3c5b2"/>
<path d="M300 0 L470 0 L490 50 L400 22 L310 40 Z" fill="#d2ae98"/>
<ellipse cx="265" cy="150" rx="34" ry="21" fill="#48525f" transform="rotate(-18 265 150)"/>
<ellipse cx="430" cy="106" rx="38" ry="23" fill="#48525f" transform="rotate(-18 430 106)"/>
<ellipse cx="268" cy="157" rx="16" ry="10" fill="#a9bccb"/>
<ellipse cx="434" cy="113" rx="18" ry="11" fill="#a9bccb"/>
<ellipse cx="330" cy="190" rx="26" ry="16" fill="#ffffff" opacity="0.8"/>
<path d="M350 238 Q372 256 396 236" stroke="#c98a80" stroke-width="8" fill="none"/>
<circle cx="215" cy="186" r="10" fill="#e8a030"/>
<circle cx="238" cy="226" r="8" fill="#d08a30"/>
</g></g>
<text x="8" y="70.4" font-size="6.7" fill="#1c1c1c" textLength="34" lengthAdjust="spacingAndGlyphs" stroke="#fff" stroke-width="1.3" stroke-opacity="0.85" paint-order="stroke" stroke-linejoin="round">Tanaka San</text>
<path d="M44.9 66.9 l2.4 2.6 l2.4 -2.6" fill="none" stroke="#1c1c1c" stroke-width="1.1"/>
<g transform="translate(2 75) scale(0.0714286)" clip-path="url(#p2c)"><g filter="url(#pb)">
<rect x="0" y="0" width="700" height="400" fill="#ffffff"/>
<path d="M12 0 L690 0 L690 70 L640 110 L600 200 L580 320 L520 320 L540 170 L300 150 L300 300 L225 300 L240 170 L150 60 L110 150 L40 190 L12 170 Z" fill="#c9a892"/>
<path d="M130 30 L200 40 L160 95 Z" fill="#7c5a80"/>
<path d="M150 50 L215 20 L240 110 L225 230 L130 300 L30 345 L30 290 L120 180 Z" fill="#f6f8fb"/>
<path d="M160 150 L205 80 L210 200 L120 290 Z" fill="#e4eaf3"/>
<circle cx="207" cy="95" r="9" fill="#8fbde8"/><circle cx="214" cy="150" r="8" fill="#8fbde8"/><circle cx="210" cy="200" r="8" fill="#9cc5ea"/><circle cx="165" cy="245" r="7" fill="#b5d2ee"/>
<path d="M300 290 L540 290 L640 400 L200 400 Z" fill="#f5f2f3"/>
<path d="M530 250 L560 250 L560 300 L530 300 Z" fill="#e8e4ea"/>
<ellipse cx="405" cy="195" rx="135" ry="100" fill="#fdeee8"/>
<path d="M330 260 L480 260 L410 305 Z" fill="#fdeee8"/>
<path d="M245 20 L610 20 L620 110 L575 180 L540 115 L480 140 L440 105 L380 140 L340 100 L290 180 L240 150 Z" fill="#d3b5a1"/>
<path d="M390 60 L430 60 L445 150 L405 170 Z" fill="#d9bdab"/>
<ellipse cx="330" cy="135" rx="32" ry="13" fill="#5a4034"/>
<ellipse cx="497" cy="148" rx="30" ry="13" fill="#5a4034"/>
<ellipse cx="338" cy="153" rx="19" ry="15" fill="#e88a22"/>
<ellipse cx="492" cy="168" rx="18" ry="15" fill="#e88a22"/>
<path d="M385 232 Q405 240 428 234" stroke="#d6a597" stroke-width="7" fill="none"/>
</g></g>
<text x="7.6" y="101.8" font-size="6.7" fill="#1c1c1c" textLength="35.6" lengthAdjust="spacingAndGlyphs" stroke="#fff" stroke-width="1.3" stroke-opacity="0.85" paint-order="stroke" stroke-linejoin="round">Sato Sasara</text>
<path d="M44.9 98.3 l2.4 2.6 l2.4 -2.6" fill="none" stroke="#1c1c1c" stroke-width="1.1"/>
<rect x="0" y="113" width="531" height="11.6" fill="#4d4d4d"/>
<rect x="10.6" y="113" width="0.8" height="11.6" fill="#37373a"/>
<rect x="30.8" y="113" width="0.8" height="11.6" fill="#37373a"/>
<rect x="61" y="113" width="0.8" height="11.6" fill="#37373a"/>
<rect x="86" y="113" width="0.8" height="11.6" fill="#37373a"/>
<rect x="109.9" y="113" width="0.8" height="11.6" fill="#37373a"/>
<rect x="135" y="113" width="0.8" height="11.6" fill="#37373a"/>
<rect x="477" y="113" width="0.8" height="11.6" fill="#37373a"/>
<text x="13.1" y="122.3" font-size="7.7" fill="#fff" font-weight="700" textLength="15.2" lengthAdjust="spacingAndGlyphs">有効</text>
<text x="33.3" y="122.3" font-size="7.7" fill="#fff" font-weight="700" textLength="20.6" lengthAdjust="spacingAndGlyphs">トラック</text>
<text x="62.9" y="122.3" font-size="7.7" fill="#fff" font-weight="700" textLength="15.4" lengthAdjust="spacingAndGlyphs">開始</text>
<text x="87.9" y="122.3" font-size="7.7" fill="#fff" font-weight="700" textLength="14.6" lengthAdjust="spacingAndGlyphs">終了</text>
<text x="112.6" y="122.3" font-size="7.7" fill="#fff" font-weight="700" textLength="13.6" lengthAdjust="spacingAndGlyphs">長さ</text>
<text x="136.9" y="122.3" font-size="7.7" fill="#fff" font-weight="700" textLength="7.4" lengthAdjust="spacingAndGlyphs">文</text>
<text x="478.9" y="122.3" font-size="7.7" fill="#fff" font-weight="700" textLength="22.6" lengthAdjust="spacingAndGlyphs">出力名</text>
<rect x="0" y="124.8" width="531" height="10.8" fill="#ef8306"/>
<rect x="10.6" y="124.8" width="0.8" height="10.75" fill="#c26a05" opacity="0.6"/>
<rect x="30.8" y="124.8" width="0.8" height="10.75" fill="#c26a05" opacity="0.6"/>
<rect x="61" y="124.8" width="0.8" height="10.75" fill="#c26a05" opacity="0.6"/>
<rect x="86" y="124.8" width="0.8" height="10.75" fill="#c26a05" opacity="0.6"/>
<rect x="109.9" y="124.8" width="0.8" height="10.75" fill="#c26a05" opacity="0.6"/>
<rect x="135" y="124.8" width="0.8" height="10.75" fill="#c26a05" opacity="0.6"/>
<rect x="477" y="124.8" width="0.8" height="10.75" fill="#c26a05" opacity="0.6"/>
<rect x="0" y="135.55" width="531" height="10.8" fill="#1b1b21"/>
<rect x="10.6" y="135.55" width="0.8" height="10.75" fill="#111116" opacity="0.6"/>
<rect x="30.8" y="135.55" width="0.8" height="10.75" fill="#111116" opacity="0.6"/>
<rect x="61" y="135.55" width="0.8" height="10.75" fill="#111116" opacity="0.6"/>
<rect x="86" y="135.55" width="0.8" height="10.75" fill="#111116" opacity="0.6"/>
<rect x="109.9" y="135.55" width="0.8" height="10.75" fill="#111116" opacity="0.6"/>
<rect x="135" y="135.55" width="0.8" height="10.75" fill="#111116" opacity="0.6"/>
<rect x="477" y="135.55" width="0.8" height="10.75" fill="#111116" opacity="0.6"/>
<rect x="0" y="146.3" width="531" height="10.8" fill="#2b2b32"/>
<rect x="10.6" y="146.3" width="0.8" height="10.75" fill="#111116" opacity="0.6"/>
<rect x="30.8" y="146.3" width="0.8" height="10.75" fill="#111116" opacity="0.6"/>
<rect x="61" y="146.3" width="0.8" height="10.75" fill="#111116" opacity="0.6"/>
<rect x="86" y="146.3" width="0.8" height="10.75" fill="#111116" opacity="0.6"/>
<rect x="109.9" y="146.3" width="0.8" height="10.75" fill="#111116" opacity="0.6"/>
<rect x="135" y="146.3" width="0.8" height="10.75" fill="#111116" opacity="0.6"/>
<rect x="477" y="146.3" width="0.8" height="10.75" fill="#111116" opacity="0.6"/>
<rect x="0" y="157.05" width="531" height="10.8" fill="#1b1b21"/>
<rect x="10.6" y="157.05" width="0.8" height="10.75" fill="#111116" opacity="0.6"/>
<rect x="30.8" y="157.05" width="0.8" height="10.75" fill="#111116" opacity="0.6"/>
<rect x="61" y="157.05" width="0.8" height="10.75" fill="#111116" opacity="0.6"/>
<rect x="86" y="157.05" width="0.8" height="10.75" fill="#111116" opacity="0.6"/>
<rect x="109.9" y="157.05" width="0.8" height="10.75" fill="#111116" opacity="0.6"/>
<rect x="135" y="157.05" width="0.8" height="10.75" fill="#111116" opacity="0.6"/>
<rect x="477" y="157.05" width="0.8" height="10.75" fill="#111116" opacity="0.6"/>
<rect x="0" y="167.8" width="531" height="10.8" fill="#2b2b32"/>
<rect x="10.6" y="167.8" width="0.8" height="10.75" fill="#111116" opacity="0.6"/>
<rect x="30.8" y="167.8" width="0.8" height="10.75" fill="#111116" opacity="0.6"/>
<rect x="61" y="167.8" width="0.8" height="10.75" fill="#111116" opacity="0.6"/>
<rect x="86" y="167.8" width="0.8" height="10.75" fill="#111116" opacity="0.6"/>
<rect x="109.9" y="167.8" width="0.8" height="10.75" fill="#111116" opacity="0.6"/>
<rect x="135" y="167.8" width="0.8" height="10.75" fill="#111116" opacity="0.6"/>
<rect x="477" y="167.8" width="0.8" height="10.75" fill="#111116" opacity="0.6"/>
<rect x="0" y="178.55" width="531" height="10.8" fill="#1b1b21"/>
<rect x="10.6" y="178.55" width="0.8" height="10.75" fill="#111116" opacity="0.6"/>
<rect x="30.8" y="178.55" width="0.8" height="10.75" fill="#111116" opacity="0.6"/>
<rect x="61" y="178.55" width="0.8" height="10.75" fill="#111116" opacity="0.6"/>
<rect x="86" y="178.55" width="0.8" height="10.75" fill="#111116" opacity="0.6"/>
<rect x="109.9" y="178.55" width="0.8" height="10.75" fill="#111116" opacity="0.6"/>
<rect x="135" y="178.55" width="0.8" height="10.75" fill="#111116" opacity="0.6"/>
<rect x="477" y="178.55" width="0.8" height="10.75" fill="#111116" opacity="0.6"/>
<rect x="0" y="189.3" width="531" height="10.8" fill="#2b2b32"/>
<rect x="10.6" y="189.3" width="0.8" height="10.75" fill="#111116" opacity="0.6"/>
<rect x="30.8" y="189.3" width="0.8" height="10.75" fill="#111116" opacity="0.6"/>
<rect x="61" y="189.3" width="0.8" height="10.75" fill="#111116" opacity="0.6"/>
<rect x="86" y="189.3" width="0.8" height="10.75" fill="#111116" opacity="0.6"/>
<rect x="109.9" y="189.3" width="0.8" height="10.75" fill="#111116" opacity="0.6"/>
<rect x="135" y="189.3" width="0.8" height="10.75" fill="#111116" opacity="0.6"/>
<rect x="477" y="189.3" width="0.8" height="10.75" fill="#111116" opacity="0.6"/>
<rect x="0" y="200.05" width="531" height="10.8" fill="#1b1b21"/>
<rect x="10.6" y="200.05" width="0.8" height="10.75" fill="#111116" opacity="0.6"/>
<rect x="30.8" y="200.05" width="0.8" height="10.75" fill="#111116" opacity="0.6"/>
<rect x="61" y="200.05" width="0.8" height="10.75" fill="#111116" opacity="0.6"/>
<rect x="86" y="200.05" width="0.8" height="10.75" fill="#111116" opacity="0.6"/>
<rect x="109.9" y="200.05" width="0.8" height="10.75" fill="#111116" opacity="0.6"/>
<rect x="135" y="200.05" width="0.8" height="10.75" fill="#111116" opacity="0.6"/>
<rect x="477" y="200.05" width="0.8" height="10.75" fill="#111116" opacity="0.6"/>
<rect x="0" y="210.8" width="531" height="10.8" fill="#2b2b32"/>
<rect x="10.6" y="210.8" width="0.8" height="10.75" fill="#111116" opacity="0.6"/>
<rect x="30.8" y="210.8" width="0.8" height="10.75" fill="#111116" opacity="0.6"/>
<rect x="61" y="210.8" width="0.8" height="10.75" fill="#111116" opacity="0.6"/>
<rect x="86" y="210.8" width="0.8" height="10.75" fill="#111116" opacity="0.6"/>
<rect x="109.9" y="210.8" width="0.8" height="10.75" fill="#111116" opacity="0.6"/>
<rect x="135" y="210.8" width="0.8" height="10.75" fill="#111116" opacity="0.6"/>
<rect x="477" y="210.8" width="0.8" height="10.75" fill="#111116" opacity="0.6"/>
<rect x="2.1" y="125.9" width="8.6" height="8.55" fill="#4b4b55" rx="1.6"/>
<polygon points="4.6,127.5 4.6,132.85 8.9,130.18" fill="#fff"/>
<rect x="18.9" y="127.4" width="6.6" height="6.2" fill="none" rx="1.3" stroke="#f9cf9c" stroke-width="0.7"/>
<path d="M20.6 130.5 l1.2 1.3 l2.2 -2.6" fill="none" stroke="#fff7ea" stroke-width="0.9"/>
<text x="33.6" y="134.1" font-size="7.4" fill="#2a1600" textLength="15.8" lengthAdjust="spacingAndGlyphs" stroke="#2a1600" stroke-width="0.22">Talk1</text>
<text x="73.9" y="134.1" font-size="7.4" fill="#2a1600" text-anchor="middle" textLength="17.14" lengthAdjust="spacingAndGlyphs" stroke="#2a1600" stroke-width="0.22">0.000</text>
<text x="98.4" y="134.1" font-size="7.4" fill="#2a1600" text-anchor="middle" textLength="17.14" lengthAdjust="spacingAndGlyphs" stroke="#2a1600" stroke-width="0.22">5.860</text>
<text x="122.9" y="134.1" font-size="7.4" fill="#2a1600" text-anchor="middle" textLength="17.14" lengthAdjust="spacingAndGlyphs" stroke="#2a1600" stroke-width="0.22">5.860</text>
<text x="137.6" y="134.3" font-size="7.6" fill="#2a1600" font-weight="500" textLength="247" lengthAdjust="spacingAndGlyphs">テキストを入力するだけで、驚くほど自然な音声を創り出すことができます。</text>
<text x="480.7" y="134.1" font-size="7.4" fill="#2a1600" textLength="23" lengthAdjust="spacingAndGlyphs" stroke="#2a1600" stroke-width="0.22">Talk1_1</text>
<rect x="2.1" y="136.65" width="8.6" height="8.55" fill="#55555b" rx="1.6"/>
<polygon points="4.6,138.25 4.6,143.6 8.9,140.93" fill="#fff"/>
<rect x="18.9" y="138.15" width="6.6" height="6.2" fill="none" rx="1.3" stroke="#d4d4d8" stroke-width="0.7"/>
<path d="M20.6 141.25 l1.2 1.3 l2.2 -2.6" fill="none" stroke="#fff" stroke-width="0.9"/>
<text x="33.6" y="144.85" font-size="7.4" fill="#fff" textLength="15.8" lengthAdjust="spacingAndGlyphs" stroke="#fff" stroke-width="0.22">Talk1</text>
<text x="73.9" y="144.85" font-size="7.4" fill="#fff" text-anchor="middle" textLength="17.14" lengthAdjust="spacingAndGlyphs" stroke="#fff" stroke-width="0.22">8.920</text>
<text x="98.4" y="144.85" font-size="7.4" fill="#fff" text-anchor="middle" textLength="20.95" lengthAdjust="spacingAndGlyphs" stroke="#fff" stroke-width="0.22">14.280</text>
<text x="122.9" y="144.85" font-size="7.4" fill="#fff" text-anchor="middle" textLength="17.14" lengthAdjust="spacingAndGlyphs" stroke="#fff" stroke-width="0.22">5.360</text>
<text x="137.6" y="145.05" font-size="7.6" fill="#fff" font-weight="500" textLength="231" lengthAdjust="spacingAndGlyphs">自分だけの辞書を作成してよく使う単語を登録しておくこともできます。</text>
<text x="480.7" y="144.85" font-size="7.4" fill="#fff" textLength="23" lengthAdjust="spacingAndGlyphs" stroke="#fff" stroke-width="0.22">Talk1_2</text>
<rect x="2.1" y="147.4" width="8.6" height="8.55" fill="#55555b" rx="1.6"/>
<polygon points="4.6,149 4.6,154.35 8.9,151.68" fill="#fff"/>
<rect x="18.9" y="148.9" width="6.6" height="6.2" fill="none" rx="1.3" stroke="#d4d4d8" stroke-width="0.7"/>
<path d="M20.6 152 l1.2 1.3 l2.2 -2.6" fill="none" stroke="#fff" stroke-width="0.9"/>
<text x="33.6" y="155.6" font-size="7.4" fill="#fff" textLength="15.8" lengthAdjust="spacingAndGlyphs" stroke="#fff" stroke-width="0.22">Talk1</text>
<text x="73.9" y="155.6" font-size="7.4" fill="#fff" text-anchor="middle" textLength="20.95" lengthAdjust="spacingAndGlyphs" stroke="#fff" stroke-width="0.22">21.963</text>
<text x="98.4" y="155.6" font-size="7.4" fill="#fff" text-anchor="middle" textLength="20.95" lengthAdjust="spacingAndGlyphs" stroke="#fff" stroke-width="0.22">29.923</text>
<text x="122.9" y="155.6" font-size="7.4" fill="#fff" text-anchor="middle" textLength="17.14" lengthAdjust="spacingAndGlyphs" stroke="#fff" stroke-width="0.22">7.960</text>
<text x="137.6" y="155.8" font-size="7.6" fill="#fff" font-weight="500" textLength="323" lengthAdjust="spacingAndGlyphs">発話単位での感情比率の設定に加え、1つの発話内でも感情の比率を変化させることができます。</text>
<text x="480.7" y="155.6" font-size="7.4" fill="#fff" textLength="23" lengthAdjust="spacingAndGlyphs" stroke="#fff" stroke-width="0.22">Talk1_3</text>
<rect x="2.1" y="158.15" width="8.6" height="8.55" fill="#55555b" rx="1.6"/>
<polygon points="4.6,159.75 4.6,165.1 8.9,162.43" fill="#fff"/>
<rect x="18.9" y="159.65" width="6.6" height="6.2" fill="none" rx="1.3" stroke="#d4d4d8" stroke-width="0.7"/>
<path d="M20.6 162.75 l1.2 1.3 l2.2 -2.6" fill="none" stroke="#fff" stroke-width="0.9"/>
<text x="33.6" y="166.35" font-size="7.4" fill="#fff" textLength="15.8" lengthAdjust="spacingAndGlyphs" stroke="#fff" stroke-width="0.22">Talk2</text>
<text x="73.9" y="166.35" font-size="7.4" fill="#fff" text-anchor="middle" textLength="17.14" lengthAdjust="spacingAndGlyphs" stroke="#fff" stroke-width="0.22">5.860</text>
<text x="98.4" y="166.35" font-size="7.4" fill="#fff" text-anchor="middle" textLength="17.14" lengthAdjust="spacingAndGlyphs" stroke="#fff" stroke-width="0.22">8.895</text>
<text x="122.9" y="166.35" font-size="7.4" fill="#fff" text-anchor="middle" textLength="17.14" lengthAdjust="spacingAndGlyphs" stroke="#fff" stroke-width="0.22">3.035</text>
<text x="137.6" y="166.55" font-size="7.6" fill="#fff" font-weight="500" textLength="146" lengthAdjust="spacingAndGlyphs">読みの修正やアクセントの変更も簡単です。</text>
<text x="480.7" y="166.35" font-size="7.4" fill="#fff" textLength="23" lengthAdjust="spacingAndGlyphs" stroke="#fff" stroke-width="0.22">Talk2_1</text>
<rect x="2.1" y="168.9" width="8.6" height="8.55" fill="#55555b" rx="1.6"/>
<polygon points="4.6,170.5 4.6,175.85 8.9,173.18" fill="#fff"/>
<rect x="18.9" y="170.4" width="6.6" height="6.2" fill="none" rx="1.3" stroke="#d4d4d8" stroke-width="0.7"/>
<path d="M20.6 173.5 l1.2 1.3 l2.2 -2.6" fill="none" stroke="#fff" stroke-width="0.9"/>
<text x="33.6" y="177.1" font-size="7.4" fill="#fff" textLength="15.8" lengthAdjust="spacingAndGlyphs" stroke="#fff" stroke-width="0.22">Talk2</text>
<text x="73.9" y="177.1" font-size="7.4" fill="#fff" text-anchor="middle" textLength="20.95" lengthAdjust="spacingAndGlyphs" stroke="#fff" stroke-width="0.22">14.320</text>
<text x="98.4" y="177.1" font-size="7.4" fill="#fff" text-anchor="middle" textLength="20.95" lengthAdjust="spacingAndGlyphs" stroke="#fff" stroke-width="0.22">20.865</text>
<text x="122.9" y="177.1" font-size="7.4" fill="#fff" text-anchor="middle" textLength="17.14" lengthAdjust="spacingAndGlyphs" stroke="#fff" stroke-width="0.22">6.545</text>
<text x="137.6" y="177.3" font-size="7.6" fill="#fff" font-weight="500" textLength="295.5" lengthAdjust="spacingAndGlyphs">悲しみが晴れて元気になっていく様子など、自由自在に感情表現を与えることができます。</text>
<text x="480.7" y="177.1" font-size="7.4" fill="#fff" textLength="23" lengthAdjust="spacingAndGlyphs" stroke="#fff" stroke-width="0.22">Talk2_2</text>
<rect x="2.1" y="179.65" width="8.6" height="8.55" fill="#55555b" rx="1.6"/>
<polygon points="4.6,181.25 4.6,186.6 8.9,183.93" fill="#fff"/>
<rect x="18.9" y="181.15" width="6.6" height="6.2" fill="none" rx="1.3" stroke="#d4d4d8" stroke-width="0.7"/>
<path d="M20.6 184.25 l1.2 1.3 l2.2 -2.6" fill="none" stroke="#fff" stroke-width="0.9"/>
<text x="33.6" y="187.85" font-size="7.4" fill="#fff" textLength="15.8" lengthAdjust="spacingAndGlyphs" stroke="#fff" stroke-width="0.22">Talk2</text>
<text x="73.9" y="187.85" font-size="7.4" fill="#fff" text-anchor="middle" textLength="20.95" lengthAdjust="spacingAndGlyphs" stroke="#fff" stroke-width="0.22">34.741</text>
<text x="98.4" y="187.85" font-size="7.4" fill="#fff" text-anchor="middle" textLength="20.95" lengthAdjust="spacingAndGlyphs" stroke="#fff" stroke-width="0.22">40.776</text>
<text x="122.9" y="187.85" font-size="7.4" fill="#fff" text-anchor="middle" textLength="17.14" lengthAdjust="spacingAndGlyphs" stroke="#fff" stroke-width="0.22">6.035</text>
<text x="137.6" y="188.05" font-size="7.6" fill="#fff" font-weight="500" textLength="255" lengthAdjust="spacingAndGlyphs">作成した音声は、個別に書き出すことも、ミックスして書き出すこともできます。</text>
<text x="480.7" y="187.85" font-size="7.4" fill="#fff" textLength="23" lengthAdjust="spacingAndGlyphs" stroke="#fff" stroke-width="0.22">Talk2_3</text>
<rect x="2.1" y="190.4" width="8.6" height="8.55" fill="#3a3a41" rx="1.6"/>
<polygon points="4.6,192 4.6,197.35 8.9,194.68" fill="#85858a"/>
<rect x="18.9" y="191.9" width="6.6" height="6.2" fill="none" rx="1.3" stroke="#88888e" stroke-width="0.7"/>
<text x="33.6" y="198.6" font-size="7.4" fill="#f0f0f0" textLength="15.8" lengthAdjust="spacingAndGlyphs" stroke="#f0f0f0" stroke-width="0.22">Talk3</text>
<rect x="2.1" y="201.15" width="8.6" height="8.55" fill="#3a3a41" rx="1.6"/>
<polygon points="4.6,202.75 4.6,208.1 8.9,205.43" fill="#85858a"/>
<rect x="18.9" y="202.65" width="6.6" height="6.2" fill="none" rx="1.3" stroke="#88888e" stroke-width="0.7"/>
<text x="33.6" y="209.35" font-size="7.4" fill="#f0f0f0" textLength="15.8" lengthAdjust="spacingAndGlyphs" stroke="#f0f0f0" stroke-width="0.22">Talk4</text>
<rect x="2.1" y="211.9" width="8.6" height="8.55" fill="#3a3a41" rx="1.6"/>
<polygon points="4.6,213.5 4.6,218.85 8.9,216.18" fill="#85858a"/>
<rect x="18.9" y="213.4" width="6.6" height="6.2" fill="none" rx="1.3" stroke="#88888e" stroke-width="0.7"/>
<text x="33.6" y="220.1" font-size="7.4" fill="#f0f0f0" textLength="15.8" lengthAdjust="spacingAndGlyphs" stroke="#f0f0f0" stroke-width="0.22">Talk5</text>
<rect x="0" y="221.55" width="531" height="58.45" fill="#05050e"/>
<rect x="0" y="280" width="531" height="4" fill="#05050e"/>
<polygon points="3.9,280.6 3.9,283 2.1,281.8" fill="#ef8306"/>
<rect x="5.7" y="280.4" width="470" height="2.8" fill="#ef8306" rx="1.4"/>
<polygon points="527.9,280.6 527.9,283 529.7,281.8" fill="#ef8306"/>
<rect x="531" y="30.7" width="1.2" height="424.3" fill="#3a3b43"/>
<rect x="0" y="283.9" width="531" height="17.8" fill="#2a2b33"/>
<rect x="1" y="286.2" width="14.9" height="15.3" fill="#fbae1f" rx="2.4"/>
<g transform="translate(8.5 293.8) rotate(223)"><path d="M-3.9 -1.9 H1.7 L4.6 0 L1.7 1.9 H-3.9 Z" fill="none" stroke="#fff0d0" stroke-width="0.85" stroke-linejoin="round"/><circle cx="2.3" cy="0" r="0.6" fill="#fff0d0"/></g>
<line x1="20" y1="290.1" x2="27.5" y2="297.6" stroke="#fff" stroke-width="1.1"/>
<g transform="translate(39.6 294) rotate(45)"><rect x="-2.6" y="-2.6" width="5.2" height="5.2" fill="none" stroke="#d2d2d6" stroke-width="1" /><line x1="-1.3" y1="-2.6" x2="-1.3" y2="2.6" stroke="#d2d2d6" stroke-width="0.9"/></g>
<rect x="58.9" y="290" width="1.2" height="7.9" fill="#fff"/>
<polygon points="67.2,290 67.2,297.9 60.5,293.95" fill="#fff"/>
<polygon points="75,290 75,297.9 82.2,293.95" fill="#fff"/>
<rect x="91" y="290" width="2.4" height="7.9" fill="#77777d"/>
<rect x="95.3" y="290" width="2.4" height="7.9" fill="#77777d"/>
<path d="M110 301.7 V288.3 a2 2 0 0 1 2 -2 H138.9 a2 2 0 0 1 2 2 V301.7 Z" fill="#56565a"/>
<path d="M110 289.3 V288.3 a2 2 0 0 1 2 -2 H138.9 a2 2 0 0 1 2 2 V289.3 Z" fill="#ef8b0a"/>
<text x="126.7" y="297.9" font-size="6.6" fill="#fff" textLength="13.7" lengthAdjust="spacingAndGlyphs" stroke="#fff" stroke-width="0.2">ACC</text>
<path d="M141.8 301.7 V288.3 a2 2 0 0 1 2 -2 H170.7 a2 2 0 0 1 2 2 V301.7 Z" fill="#e0262c"/>
<text x="158.5" y="297.9" font-size="6.6" fill="#6a0a0e" font-weight="bold" textLength="12.1" lengthAdjust="spacingAndGlyphs" stroke="#6a0a0e" stroke-width="0.2">STY</text>
<path d="M173.6 301.7 V288.3 a2 2 0 0 1 2 -2 H202.5 a2 2 0 0 1 2 2 V301.7 Z" fill="#56565a"/>
<path d="M173.6 289.3 V288.3 a2 2 0 0 1 2 -2 H202.5 a2 2 0 0 1 2 2 V289.3 Z" fill="#c44bd2"/>
<text x="190.3" y="297.9" font-size="6.6" fill="#fff" textLength="11.9" lengthAdjust="spacingAndGlyphs" stroke="#fff" stroke-width="0.2">VOL</text>
<path d="M205.4 301.7 V288.3 a2 2 0 0 1 2 -2 H234.3 a2 2 0 0 1 2 2 V301.7 Z" fill="#56565a"/>
<path d="M205.4 289.3 V288.3 a2 2 0 0 1 2 -2 H234.3 a2 2 0 0 1 2 2 V289.3 Z" fill="#6b3ff2"/>
<text x="222.1" y="297.9" font-size="6.6" fill="#fff" textLength="9.8" lengthAdjust="spacingAndGlyphs" stroke="#fff" stroke-width="0.2">PIT</text>
<path d="M237.2 301.7 V288.3 a2 2 0 0 1 2 -2 H266.1 a2 2 0 0 1 2 2 V301.7 Z" fill="#56565a"/>
<path d="M237.2 289.3 V288.3 a2 2 0 0 1 2 -2 H266.1 a2 2 0 0 1 2 2 V289.3 Z" fill="#2fd67c"/>
<text x="253.9" y="297.9" font-size="6.6" fill="#fff" textLength="12.2" lengthAdjust="spacingAndGlyphs" stroke="#fff" stroke-width="0.2">ALP</text>
<path d="M269 301.7 V288.3 a2 2 0 0 1 2 -2 H297.9 a2 2 0 0 1 2 2 V301.7 Z" fill="#56565a"/>
<path d="M269 289.3 V288.3 a2 2 0 0 1 2 -2 H297.9 a2 2 0 0 1 2 2 V289.3 Z" fill="#8fd62b"/>
<text x="285.7" y="297.9" font-size="6.6" fill="#fff" textLength="13.3" lengthAdjust="spacingAndGlyphs" stroke="#fff" stroke-width="0.2">HUS</text>
<path d="M114 298.2 L119.6 292.6 L124.4 292.6" fill="none" stroke="#fff" stroke-width="1.1"/>
<circle cx="114" cy="298.2" r="1.6" fill="#fff"/>
<circle cx="119.4" cy="292.7" r="1.6" fill="#fff"/>
<circle cx="124.5" cy="292.7" r="1.6" fill="#fff"/>
<circle cx="150" cy="294.3" r="5.1" fill="none" stroke="#3a0608" stroke-width="1.25"/>
<circle cx="148.3" cy="292.8" r="0.9" fill="#3a0608"/>
<circle cx="151.7" cy="292.8" r="0.9" fill="#3a0608"/>
<path d="M147.2 295.6 Q150 298.6 152.8 295.6" fill="none" stroke="#3a0608" stroke-width="1.1"/>
<path d="M175.3 292.5 h2.2 l2.8 -2.3 v8.6 l-2.8 -2.3 h-2.2 Z" fill="#fff"/>
<path d="M182 291.9 q2 2.6 0 5.2 M184.2 290.3 q3.4 4.2 0 8.4" fill="none" stroke="#fff" stroke-width="1.25"/>
<path d="M209 298 C214.8 298 212.4 292 218.1 292" fill="none" stroke="#fff" stroke-width="1.1"/>
<circle cx="209" cy="298" r="1.6" fill="#fff"/>
<circle cx="218.2" cy="292" r="1.8" fill="#fff"/>
<path d="M245.8 292 a1.95 1.95 0 1 1 3.7 0.6 l1.9 1 l-0.5 1.4 l-1.5 -0.5 l0.2 1.7 l1.2 2.4 l-1.5 0.6 l-1.4 -2 l-1 1.7 l-1.4 -0.6 l0.9 -2.4 l-0.1 -1.5 l-1.5 0.6 l-0.6 -1.2 l1.9 -1.3 Z" fill="#fff" stroke="#fff" stroke-width="0.45" stroke-linejoin="round"/>
<line x1="239.4" y1="291.7" x2="242.2" y2="293.1" stroke="#fff" stroke-width="1"/>
<line x1="239.2" y1="294.8" x2="242.2" y2="294.8" stroke="#fff" stroke-width="1"/>
<line x1="239.4" y1="297.9" x2="242.2" y2="296.5" stroke="#fff" stroke-width="1"/>
<path d="M277.6 292 a1.95 1.95 0 1 1 3.7 0.6 l1.9 1 l-0.5 1.4 l-1.5 -0.5 l0.2 1.7 l1.2 2.4 l-1.5 0.6 l-1.4 -2 l-1 1.7 l-1.4 -0.6 l0.9 -2.4 l-0.1 -1.5 l-1.5 0.6 l-0.6 -1.2 l1.9 -1.3 Z" fill="#fff" stroke="#fff" stroke-width="0.45" stroke-linejoin="round"/>
<line x1="271.2" y1="291.7" x2="274" y2="293.1" stroke="#fff" stroke-width="1" stroke-dasharray="0.7 0.6"/>
<line x1="271" y1="294.8" x2="274" y2="294.8" stroke="#fff" stroke-width="1" stroke-dasharray="0.7 0.6"/>
<line x1="271.2" y1="297.9" x2="274" y2="296.5" stroke="#fff" stroke-width="1" stroke-dasharray="0.7 0.6"/>
<rect x="0" y="301.6" width="531" height="1.3" fill="#c4242a"/>
<rect x="0" y="302.9" width="531" height="35" fill="#05050e"/>
<text x="32.6" y="311.6" font-size="6.7" fill="#fff" text-anchor="middle" font-weight="700">テ</text>
<text x="45.5" y="311.6" font-size="6.7" fill="#fff" text-anchor="middle" font-weight="700">キ</text>
<text x="59" y="311.6" font-size="6.7" fill="#fff" text-anchor="middle" font-weight="700">ス</text>
<text x="71.5" y="311.6" font-size="6.7" fill="#fff" text-anchor="middle" font-weight="700">ト</text>
<text x="112.7" y="311.6" font-size="6.7" fill="#fff" text-anchor="middle" font-weight="700">を</text>
<text x="153.3" y="311.6" font-size="6.7" fill="#fff" text-anchor="middle" font-weight="700">入</text>
<text x="172.9" y="311.6" font-size="6.7" fill="#fff" text-anchor="middle" font-weight="700">力</text>
<text x="216.7" y="311.6" font-size="6.7" fill="#fff" text-anchor="middle" font-weight="700">す</text>
<text x="226.9" y="311.6" font-size="6.7" fill="#fff" text-anchor="middle" font-weight="700">る</text>
<text x="258.3" y="311.6" font-size="6.7" fill="#fff" text-anchor="middle" font-weight="700">だ</text>
<text x="271.1" y="311.6" font-size="6.7" fill="#fff" text-anchor="middle" font-weight="700">け</text>
<text x="306.7" y="311.6" font-size="6.7" fill="#fff" text-anchor="middle" font-weight="700">で</text>
<text x="344.3" y="311.6" font-size="6.7" fill="#fff" text-anchor="middle" font-weight="700">、</text>
<text x="389.7" y="311.6" font-size="6.7" fill="#fff" text-anchor="middle" font-weight="700">驚</text>
<text x="409.7" y="311.6" font-size="6.7" fill="#fff" text-anchor="middle" font-weight="700">く</text>
<text x="456" y="311.6" font-size="6.7" fill="#fff" text-anchor="middle" font-weight="700">ほ</text>
<text x="466.9" y="311.6" font-size="6.7" fill="#fff" text-anchor="middle" font-weight="700">ど</text>
<text x="508.3" y="311.6" font-size="6.7" fill="#fff" text-anchor="middle" font-weight="700">自</text>
<text x="525.7" y="311.6" font-size="6.7" fill="#fff" text-anchor="middle" font-weight="700">然</text>
<rect x="2.1" y="315.2" width="529" height="0.7" fill="#2c2c34"/>
<rect x="2.1" y="325.3" width="529" height="0.7" fill="#2c2c34"/>
<rect x="1.75" y="315.2" width="0.7" height="10.8" fill="#3a3a42"/>
<rect x="101.75" y="315.2" width="0.7" height="10.8" fill="#3a3a42"/>
<rect x="123.25" y="315.2" width="0.7" height="10.8" fill="#3a3a42"/>
<rect x="202.25" y="315.2" width="0.7" height="10.8" fill="#3a3a42"/>
<rect x="241.75" y="315.2" width="0.7" height="10.8" fill="#3a3a42"/>
<rect x="287.65" y="315.2" width="0.7" height="10.8" fill="#3a3a42"/>
<rect x="326.05" y="315.2" width="0.7" height="10.8" fill="#3a3a42"/>
<rect x="360.05" y="315.2" width="0.7" height="10.8" fill="#3a3a42"/>
<rect x="439.65" y="315.2" width="0.7" height="10.8" fill="#3a3a42"/>
<rect x="483.25" y="315.2" width="0.7" height="10.8" fill="#3a3a42"/>
<text x="52.3" y="323.1" font-size="6.6" fill="#fff" text-anchor="middle" font-weight="700" textLength="25.4" lengthAdjust="spacingAndGlyphs">テキ゛スト</text>
<text x="112.7" y="323.1" font-size="6.6" fill="#fff" text-anchor="middle" font-weight="700" textLength="4.8" lengthAdjust="spacingAndGlyphs">ヲ</text>
<text x="163.2" y="323.1" font-size="6.6" fill="#fff" text-anchor="middle" font-weight="700" textLength="31.4" lengthAdjust="spacingAndGlyphs">ニューリョク゛</text>
<text x="222.5" y="323.1" font-size="6.6" fill="#fff" text-anchor="middle" font-weight="700" textLength="10.9" lengthAdjust="spacingAndGlyphs">スル</text>
<text x="265" y="323.1" font-size="6.6" fill="#fff" text-anchor="middle" font-weight="700" textLength="10.8" lengthAdjust="spacingAndGlyphs">ダケ</text>
<text x="306.9" y="323.1" font-size="6.6" fill="#fff" text-anchor="middle" font-weight="700" textLength="5.2" lengthAdjust="spacingAndGlyphs">デ</text>
<text x="344.4" y="323.1" font-size="6.6" fill="#fff" text-anchor="middle" font-weight="700" textLength="5" lengthAdjust="spacingAndGlyphs">、</text>
<text x="399.3" y="323.1" font-size="6.6" fill="#fff" text-anchor="middle" font-weight="700" textLength="23.2" lengthAdjust="spacingAndGlyphs">オドロク゛</text>
<text x="462.2" y="323.1" font-size="6.6" fill="#fff" text-anchor="middle" font-weight="700" textLength="10.7" lengthAdjust="spacingAndGlyphs">ホド</text>
<text x="518.2" y="323.1" font-size="6.6" fill="#fff" text-anchor="middle" font-weight="700" textLength="16.6" lengthAdjust="spacingAndGlyphs">シゼン</text>
<rect x="0.85" y="327.5" width="0.7" height="10" fill="#55555d"/>
<text x="1.8" y="333.4" font-size="6.7" fill="#fff" textLength="15" lengthAdjust="spacingAndGlyphs">00:00</text>
<rect x="17.71" y="334.6" width="0.6" height="2.6" fill="#6d6d74"/>
<rect x="34.52" y="334.6" width="0.6" height="2.6" fill="#6d6d74"/>
<rect x="51.33" y="334.6" width="0.6" height="2.6" fill="#6d6d74"/>
<rect x="68.14" y="334.6" width="0.6" height="2.6" fill="#6d6d74"/>
<rect x="84.95" y="334.6" width="0.6" height="2.6" fill="#6d6d74"/>
<rect x="101.76" y="334.6" width="0.6" height="2.6" fill="#6d6d74"/>
<rect x="118.57" y="334.6" width="0.6" height="2.6" fill="#6d6d74"/>
<rect x="135.38" y="334.6" width="0.6" height="2.6" fill="#6d6d74"/>
<rect x="152.19" y="334.6" width="0.6" height="2.6" fill="#6d6d74"/>
<rect x="168.95" y="327.5" width="0.7" height="10" fill="#55555d"/>
<text x="169.9" y="333.4" font-size="6.7" fill="#fff" textLength="15" lengthAdjust="spacingAndGlyphs">00:01</text>
<rect x="185.81" y="334.6" width="0.6" height="2.6" fill="#6d6d74"/>
<rect x="202.62" y="334.6" width="0.6" height="2.6" fill="#6d6d74"/>
<rect x="219.43" y="334.6" width="0.6" height="2.6" fill="#6d6d74"/>
<rect x="236.24" y="334.6" width="0.6" height="2.6" fill="#6d6d74"/>
<rect x="253.05" y="334.6" width="0.6" height="2.6" fill="#6d6d74"/>
<rect x="269.86" y="334.6" width="0.6" height="2.6" fill="#6d6d74"/>
<rect x="286.67" y="334.6" width="0.6" height="2.6" fill="#6d6d74"/>
<rect x="303.48" y="334.6" width="0.6" height="2.6" fill="#6d6d74"/>
<rect x="320.29" y="334.6" width="0.6" height="2.6" fill="#6d6d74"/>
<rect x="337.05" y="327.5" width="0.7" height="10" fill="#55555d"/>
<text x="338" y="333.4" font-size="6.7" fill="#fff" textLength="15" lengthAdjust="spacingAndGlyphs">00:02</text>
<rect x="353.91" y="334.6" width="0.6" height="2.6" fill="#6d6d74"/>
<rect x="370.72" y="334.6" width="0.6" height="2.6" fill="#6d6d74"/>
<rect x="387.53" y="334.6" width="0.6" height="2.6" fill="#6d6d74"/>
<rect x="404.34" y="334.6" width="0.6" height="2.6" fill="#6d6d74"/>
<rect x="421.15" y="334.6" width="0.6" height="2.6" fill="#6d6d74"/>
<rect x="437.96" y="334.6" width="0.6" height="2.6" fill="#6d6d74"/>
<rect x="454.77" y="334.6" width="0.6" height="2.6" fill="#6d6d74"/>
<rect x="471.58" y="334.6" width="0.6" height="2.6" fill="#6d6d74"/>
<rect x="488.39" y="334.6" width="0.6" height="2.6" fill="#6d6d74"/>
<rect x="505.15" y="327.5" width="0.7" height="10" fill="#55555d"/>
<text x="506.1" y="333.4" font-size="6.7" fill="#fff" textLength="15" lengthAdjust="spacingAndGlyphs">00:03</text>
<rect x="522.01" y="334.6" width="0.6" height="2.6" fill="#6d6d74"/>
<defs><clipPath id="chclip"><rect x="0" y="337.9" width="531" height="102.7"/></clipPath></defs>
<g clip-path="url(#chclip)">
<rect x="0" y="337.9" width="531" height="102.7" fill="#1f964a"/>
<polygon points="0,350.7 360,350.7 483,440.6 0,440.6" fill="#a0951c"/>
<polygon points="0,420.6 360,420.6 483,440.6 0,440.6" fill="#a9671f"/>
<defs><clipPath id="ybclip"><polygon points="0,350.7 360,350.7 483,440.6 0,440.6"/></clipPath></defs>
<rect x="29.6" y="337.9" width="0.8" height="102.7" fill="#c8902c" opacity="0.28"/>
<rect x="54.6" y="337.9" width="0.8" height="102.7" fill="#c8902c" opacity="0.28"/>
<rect x="77.1" y="337.9" width="0.8" height="102.7" fill="#c8902c" opacity="0.28"/>
<rect x="102.6" y="337.9" width="0.8" height="102.7" fill="#c8902c" opacity="0.28"/>
<rect x="123.8" y="337.9" width="0.8" height="102.7" fill="#c8902c" opacity="0.28"/>
<rect x="154" y="337.9" width="0.8" height="102.7" fill="#c8902c" opacity="0.28"/>
<rect x="166.1" y="337.9" width="0.8" height="102.7" fill="#c8902c" opacity="0.28"/>
<rect x="185.2" y="337.9" width="0.8" height="102.7" fill="#c8902c" opacity="0.28"/>
<rect x="202.4" y="337.9" width="0.8" height="102.7" fill="#c8902c" opacity="0.28"/>
<rect x="224.6" y="337.9" width="0.8" height="102.7" fill="#c8902c" opacity="0.28"/>
<rect x="242.1" y="337.9" width="0.8" height="102.7" fill="#c8902c" opacity="0.28"/>
<rect x="262.4" y="337.9" width="0.8" height="102.7" fill="#c8902c" opacity="0.28"/>
<rect x="287.7" y="337.9" width="0.8" height="102.7" fill="#c8902c" opacity="0.28"/>
<rect x="326.6" y="337.9" width="0.8" height="102.7" fill="#c8902c" opacity="0.28"/>
<rect x="373.5" y="337.9" width="0.8" height="102.7" fill="#c8902c" opacity="0.28"/>
<rect x="393.9" y="337.9" width="0.8" height="102.7" fill="#c8902c" opacity="0.28"/>
<rect x="414.5" y="337.9" width="0.8" height="102.7" fill="#c8902c" opacity="0.28"/>
<rect x="440.3" y="337.9" width="0.8" height="102.7" fill="#c8902c" opacity="0.28"/>
<rect x="462.8" y="337.9" width="0.8" height="102.7" fill="#c8902c" opacity="0.28"/>
<rect x="513.3" y="337.9" width="0.8" height="102.7" fill="#c8902c" opacity="0.28"/>
<g clip-path="url(#ybclip)">
<rect x="29.65" y="337.9" width="0.7" height="102.7" fill="#e07a10" opacity="0.5"/>
<rect x="54.65" y="337.9" width="0.7" height="102.7" fill="#e07a10" opacity="0.5"/>
<rect x="77.15" y="337.9" width="0.7" height="102.7" fill="#e07a10" opacity="0.5"/>
<rect x="102.65" y="337.9" width="0.7" height="102.7" fill="#e07a10" opacity="0.5"/>
<rect x="123.85" y="337.9" width="0.7" height="102.7" fill="#e07a10" opacity="0.5"/>
<rect x="154.05" y="337.9" width="0.7" height="102.7" fill="#e07a10" opacity="0.5"/>
<rect x="166.15" y="337.9" width="0.7" height="102.7" fill="#e07a10" opacity="0.5"/>
<rect x="185.25" y="337.9" width="0.7" height="102.7" fill="#e07a10" opacity="0.5"/>
<rect x="202.45" y="337.9" width="0.7" height="102.7" fill="#e07a10" opacity="0.5"/>
<rect x="224.65" y="337.9" width="0.7" height="102.7" fill="#e07a10" opacity="0.5"/>
<rect x="242.15" y="337.9" width="0.7" height="102.7" fill="#e07a10" opacity="0.5"/>
<rect x="262.45" y="337.9" width="0.7" height="102.7" fill="#e07a10" opacity="0.5"/>
<rect x="287.75" y="337.9" width="0.7" height="102.7" fill="#e07a10" opacity="0.5"/>
<rect x="326.65" y="337.9" width="0.7" height="102.7" fill="#e07a10" opacity="0.5"/>
<rect x="373.55" y="337.9" width="0.7" height="102.7" fill="#e07a10" opacity="0.5"/>
<rect x="393.95" y="337.9" width="0.7" height="102.7" fill="#e07a10" opacity="0.5"/>
<rect x="414.55" y="337.9" width="0.7" height="102.7" fill="#e07a10" opacity="0.5"/>
<rect x="440.35" y="337.9" width="0.7" height="102.7" fill="#e07a10" opacity="0.5"/>
<rect x="462.85" y="337.9" width="0.7" height="102.7" fill="#e07a10" opacity="0.5"/>
<rect x="513.35" y="337.9" width="0.7" height="102.7" fill="#e07a10" opacity="0.5"/>
</g>
<path d="M18.62 368.2 L40.38 410.3 M48.9 414.8 L59.7 414.8 M72.1 414.8 L83.2 414.8 M95.6 414.8 L107 414.8" fill="none" stroke="#ffec70" stroke-width="1.3" opacity="0.4"/>
<rect x="10.1" y="359.2" width="12.4" height="9" fill="#ffec70" rx="3" opacity="0.27"/>
<rect x="36.5" y="410.3" width="12.4" height="9" fill="#ffec70" rx="3" opacity="0.27"/>
<rect x="59.7" y="410.3" width="12.4" height="9" fill="#ffec70" rx="3" opacity="0.27"/>
<rect x="83.2" y="410.3" width="12.4" height="9" fill="#ffec70" rx="3" opacity="0.27"/>
<rect x="107" y="410.3" width="12.4" height="9" fill="#ffec70" rx="3" opacity="0.27"/>
<text x="16.3" y="365.9" font-size="5.8" fill="#6b6208" text-anchor="middle" opacity="0.5">テ</text>
<text x="42.7" y="417" font-size="5.8" fill="#6b6208" text-anchor="middle" opacity="0.5">キ</text>
<text x="65.9" y="417" font-size="5.8" fill="#6b6208" text-anchor="middle" opacity="0.5">ス</text>
<text x="89.4" y="417" font-size="5.8" fill="#6b6208" text-anchor="middle" opacity="0.5">ト</text>
<text x="113.2" y="417" font-size="5.8" fill="#6b6208" text-anchor="middle" opacity="0.5">ヲ</text>
<path d="M140.94 410.3 L158.16 368.2 M166.2 363.7 L169 363.7 M181.4 363.7 L187.5 363.7 M199.9 363.7 L207.6 363.7 M220 363.7 L227.5 363.7" fill="none" stroke="#ffec70" stroke-width="1.3" opacity="0.4"/>
<rect x="132.9" y="410.3" width="12.4" height="9" fill="#ffec70" rx="3" opacity="0.27"/>
<rect x="153.8" y="359.2" width="12.4" height="9" fill="#ffec70" rx="3" opacity="0.27"/>
<rect x="169" y="359.2" width="12.4" height="9" fill="#ffec70" rx="3" opacity="0.27"/>
<rect x="187.5" y="359.2" width="12.4" height="9" fill="#ffec70" rx="3" opacity="0.27"/>
<rect x="207.6" y="359.2" width="12.4" height="9" fill="#ffec70" rx="3" opacity="0.27"/>
<rect x="227.5" y="359.2" width="12.4" height="9" fill="#ffec70" rx="3" opacity="0.27"/>
<text x="139.1" y="417" font-size="5.8" fill="#6b6208" text-anchor="middle" opacity="0.5">ニュ</text>
<text x="160" y="365.9" font-size="5.8" fill="#6b6208" text-anchor="middle" opacity="0.5">ー</text>
<text x="175.2" y="365.9" font-size="5.8" fill="#6b6208" text-anchor="middle" opacity="0.5">リョ</text>
<text x="193.7" y="365.9" font-size="5.8" fill="#6b6208" text-anchor="middle" opacity="0.5">ク</text>
<text x="213.8" y="365.9" font-size="5.8" fill="#6b6208" text-anchor="middle" opacity="0.5">ス</text>
<text x="233.7" y="365.9" font-size="5.8" fill="#6b6208" text-anchor="middle" opacity="0.5">ル</text>
<path d="M254.23 410.3 L273.27 368.2 M278.14 368.2 L304.76 410.3" fill="none" stroke="#ffec70" stroke-width="1.3" opacity="0.4"/>
<rect x="246" y="410.3" width="12.4" height="9" fill="#ffec70" rx="3" opacity="0.27"/>
<rect x="269.1" y="359.2" width="12.4" height="9" fill="#ffec70" rx="3" opacity="0.27"/>
<rect x="301.4" y="410.3" width="12.4" height="9" fill="#ffec70" rx="3" opacity="0.27"/>
<text x="252.2" y="417" font-size="5.8" fill="#6b6208" text-anchor="middle" opacity="0.5">ダ</text>
<text x="275.3" y="365.9" font-size="5.8" fill="#6b6208" text-anchor="middle" opacity="0.5">ケ</text>
<text x="307.6" y="417" font-size="5.8" fill="#6b6208" text-anchor="middle" opacity="0.5">デ</text>
<path d="M368.89 410.3 L382.81 368.2 M390.5 363.7 L398.3 363.7 M406.53 368.2 L425.47 410.3 M433.7 414.8 L445.6 414.8 M458 414.8 L466.8 414.8" fill="none" stroke="#f4f6a0" stroke-width="1.3" opacity="0.37"/>
<rect x="361.2" y="410.3" width="12.4" height="9" fill="#f4f6a0" rx="3" opacity="0.24"/>
<rect x="378.1" y="359.2" width="12.4" height="9" fill="#f4f6a0" rx="3" opacity="0.24"/>
<rect x="398.3" y="359.2" width="12.4" height="9" fill="#f4f6a0" rx="3" opacity="0.24"/>
<rect x="421.3" y="410.3" width="12.4" height="9" fill="#f4f6a0" rx="3" opacity="0.24"/>
<rect x="445.6" y="410.3" width="12.4" height="9" fill="#f4f6a0" rx="3" opacity="0.24"/>
<rect x="466.8" y="410.3" width="12.4" height="9" fill="#f4f6a0" rx="3" opacity="0.24"/>
<text x="367.4" y="417" font-size="5.8" fill="#3f7a30" text-anchor="middle" opacity="0.5">オ</text>
<text x="384.3" y="365.9" font-size="5.8" fill="#3f7a30" text-anchor="middle" opacity="0.5">ド</text>
<text x="404.5" y="365.9" font-size="5.8" fill="#3f7a30" text-anchor="middle" opacity="0.5">ロ</text>
<text x="427.5" y="417" font-size="5.8" fill="#3f7a30" text-anchor="middle" opacity="0.5">ク</text>
<text x="451.8" y="417" font-size="5.8" fill="#3f7a30" text-anchor="middle" opacity="0.5">ホ</text>
<text x="473" y="417" font-size="5.8" fill="#3f7a30" text-anchor="middle" opacity="0.5">ド</text>
<path d="M501.09 410.3 L526.31 368.2" fill="none" stroke="#a6ffc0" stroke-width="1.3" opacity="0.33"/>
<rect x="492.2" y="410.3" width="12.4" height="9" fill="#a6ffc0" rx="3" opacity="0.2"/>
<rect x="522.8" y="359.2" width="12.4" height="9" fill="#a6ffc0" rx="3" opacity="0.2"/>
<text x="498.4" y="417" font-size="5.8" fill="#0f6a30" text-anchor="middle" opacity="0.5">シ</text>
<text x="529" y="365.9" font-size="5.8" fill="#0f6a30" text-anchor="middle" opacity="0.5">ゼ</text>
<rect x="359.1" y="337.9" width="1.8" height="102.7" fill="#fff200"/>
<rect x="482.1" y="337.9" width="1.8" height="102.7" fill="#b23b32"/>
<rect x="1" y="337.9" width="1.6" height="102.7" fill="#d82424"/>
</g>
<rect x="0" y="337.9" width="1" height="102.7" fill="#3a0808"/>
<rect x="0" y="440.6" width="531" height="10" fill="#020208"/>
<rect x="1.75" y="441" width="0.7" height="9.4" fill="#35353d"/>
<rect x="16.05" y="441" width="0.7" height="9.4" fill="#35353d"/>
<rect x="28.95" y="441" width="0.7" height="9.4" fill="#35353d"/>
<rect x="45.05" y="441" width="0.7" height="9.4" fill="#35353d"/>
<rect x="54.65" y="441" width="0.7" height="9.4" fill="#35353d"/>
<rect x="67.95" y="441" width="0.7" height="9.4" fill="#35353d"/>
<rect x="77.55" y="441" width="0.7" height="9.4" fill="#35353d"/>
<rect x="86.75" y="441" width="0.7" height="9.4" fill="#35353d"/>
<rect x="102.55" y="441" width="0.7" height="9.4" fill="#35353d"/>
<rect x="123.25" y="441" width="0.7" height="9.4" fill="#35353d"/>
<rect x="139.25" y="441" width="0.7" height="9.4" fill="#35353d"/>
<rect x="153.95" y="441" width="0.7" height="9.4" fill="#35353d"/>
<rect x="165.65" y="441" width="0.7" height="9.4" fill="#35353d"/>
<rect x="175.35" y="441" width="0.7" height="9.4" fill="#35353d"/>
<rect x="184.95" y="441" width="0.7" height="9.4" fill="#35353d"/>
<rect x="195.05" y="441" width="0.7" height="9.4" fill="#35353d"/>
<rect x="202.55" y="441" width="0.7" height="9.4" fill="#35353d"/>
<rect x="218.25" y="441" width="0.7" height="9.4" fill="#35353d"/>
<rect x="225.05" y="441" width="0.7" height="9.4" fill="#35353d"/>
<rect x="232.55" y="441" width="0.7" height="9.4" fill="#35353d"/>
<rect x="242.25" y="441" width="0.7" height="9.4" fill="#35353d"/>
<rect x="248.95" y="441" width="0.7" height="9.4" fill="#35353d"/>
<rect x="262.55" y="441" width="0.7" height="9.4" fill="#35353d"/>
<rect x="274.25" y="441" width="0.7" height="9.4" fill="#35353d"/>
<rect x="287.75" y="441" width="0.7" height="9.4" fill="#35353d"/>
<rect x="295.35" y="441" width="0.7" height="9.4" fill="#35353d"/>
<rect x="326.35" y="441" width="0.7" height="9.4" fill="#35353d"/>
<rect x="359.65" y="441" width="0.7" height="9.4" fill="#35353d"/>
<rect x="373.25" y="441" width="0.7" height="9.4" fill="#35353d"/>
<rect x="381.75" y="441" width="0.7" height="9.4" fill="#35353d"/>
<rect x="393.55" y="441" width="0.7" height="9.4" fill="#35353d"/>
<rect x="401.35" y="441" width="0.7" height="9.4" fill="#35353d"/>
<rect x="414.25" y="441" width="0.7" height="9.4" fill="#35353d"/>
<rect x="429.65" y="441" width="0.7" height="9.4" fill="#35353d"/>
<rect x="440.35" y="441" width="0.7" height="9.4" fill="#35353d"/>
<rect x="451.05" y="441" width="0.7" height="9.4" fill="#35353d"/>
<rect x="462.55" y="441" width="0.7" height="9.4" fill="#35353d"/>
<rect x="469.35" y="441" width="0.7" height="9.4" fill="#35353d"/>
<rect x="483.25" y="441" width="0.7" height="9.4" fill="#35353d"/>
<rect x="503.95" y="441" width="0.7" height="9.4" fill="#35353d"/>
<rect x="512.55" y="441" width="0.7" height="9.4" fill="#35353d"/>
<rect x="523.65" y="441" width="0.7" height="9.4" fill="#35353d"/>
<text x="9.3" y="448.3" font-size="6.2" fill="#fff" text-anchor="middle" font-weight="bold">t</text>
<text x="22.9" y="448.3" font-size="6.2" fill="#fff" text-anchor="middle" font-weight="bold">e</text>
<text x="37.4" y="448.3" font-size="6.2" fill="#fff" text-anchor="middle" font-weight="bold">k</text>
<text x="49.7" y="448.3" font-size="6.2" fill="#fff" text-anchor="middle" font-weight="bold">I</text>
<text x="61.4" y="448.3" font-size="6.2" fill="#fff" text-anchor="middle" font-weight="bold">s</text>
<text x="72.4" y="448.3" font-size="6.2" fill="#fff" text-anchor="middle" font-weight="bold">u</text>
<text x="82.1" y="448.3" font-size="6.2" fill="#fff" text-anchor="middle" font-weight="bold">t</text>
<text x="95" y="448.3" font-size="6.2" fill="#fff" text-anchor="middle" font-weight="bold">o</text>
<text x="112.9" y="448.3" font-size="6.2" fill="#fff" text-anchor="middle" font-weight="bold">o</text>
<text x="131.4" y="448.3" font-size="6.2" fill="#fff" text-anchor="middle" font-weight="bold">ny</text>
<text x="146.7" y="448.3" font-size="6.2" fill="#fff" text-anchor="middle" font-weight="bold">u</text>
<text x="160" y="448.3" font-size="6.2" fill="#fff" text-anchor="middle" font-weight="bold">u</text>
<text x="170.7" y="448.3" font-size="6.2" fill="#fff" text-anchor="middle" font-weight="bold">ry</text>
<text x="180.3" y="448.3" font-size="6.2" fill="#fff" text-anchor="middle" font-weight="bold">o</text>
<text x="190.4" y="448.3" font-size="6.2" fill="#fff" text-anchor="middle" font-weight="bold">k</text>
<text x="198.9" y="448.3" font-size="6.2" fill="#fff" text-anchor="middle" font-weight="bold">U</text>
<text x="210.7" y="448.3" font-size="6.2" fill="#fff" text-anchor="middle" font-weight="bold">s</text>
<text x="222.1" y="448.3" font-size="6.2" fill="#fff" text-anchor="middle" font-weight="bold">u</text>
<text x="228.9" y="448.3" font-size="6.2" fill="#fff" text-anchor="middle" font-weight="bold">r</text>
<text x="237.4" y="448.3" font-size="6.2" fill="#fff" text-anchor="middle" font-weight="bold">u</text>
<text x="245.7" y="448.3" font-size="6.2" fill="#fff" text-anchor="middle" font-weight="bold">d</text>
<text x="255.7" y="448.3" font-size="6.2" fill="#fff" text-anchor="middle" font-weight="bold">a</text>
<text x="268.3" y="448.3" font-size="6.2" fill="#fff" text-anchor="middle" font-weight="bold">k</text>
<text x="281.4" y="448.3" font-size="6.2" fill="#fff" text-anchor="middle" font-weight="bold">e</text>
<text x="292.1" y="448.3" font-size="6.2" fill="#fff" text-anchor="middle" font-weight="bold">d</text>
<text x="311.4" y="448.3" font-size="6.2" fill="#fff" text-anchor="middle" font-weight="bold">e</text>
<text x="343.6" y="448.3" font-size="6.2" fill="#fff" text-anchor="middle" font-weight="bold">pau</text>
<text x="366.7" y="448.3" font-size="6.2" fill="#fff" text-anchor="middle" font-weight="bold">o</text>
<text x="377.9" y="448.3" font-size="6.2" fill="#fff" text-anchor="middle" font-weight="bold">d</text>
<text x="387.9" y="448.3" font-size="6.2" fill="#fff" text-anchor="middle" font-weight="bold">o</text>
<text x="397.4" y="448.3" font-size="6.2" fill="#fff" text-anchor="middle" font-weight="bold">r</text>
<text x="408.1" y="448.3" font-size="6.2" fill="#fff" text-anchor="middle" font-weight="bold">o</text>
<text x="422.1" y="448.3" font-size="6.2" fill="#fff" text-anchor="middle" font-weight="bold">k</text>
<text x="434.7" y="448.3" font-size="6.2" fill="#fff" text-anchor="middle" font-weight="bold">U</text>
<text x="445.7" y="448.3" font-size="6.2" fill="#fff" text-anchor="middle" font-weight="bold">h</text>
<text x="457.1" y="448.3" font-size="6.2" fill="#fff" text-anchor="middle" font-weight="bold">o</text>
<text x="466.4" y="448.3" font-size="6.2" fill="#fff" text-anchor="middle" font-weight="bold">d</text>
<text x="476.7" y="448.3" font-size="6.2" fill="#fff" text-anchor="middle" font-weight="bold">o</text>
<text x="494.3" y="448.3" font-size="6.2" fill="#fff" text-anchor="middle" font-weight="bold">sh</text>
<text x="508.6" y="448.3" font-size="6.2" fill="#fff" text-anchor="middle" font-weight="bold">i</text>
<text x="518.6" y="448.3" font-size="6.2" fill="#fff" text-anchor="middle" font-weight="bold">z</text>
<rect x="0" y="450.5" width="531" height="4.5" fill="#2a2b33"/>
<polygon points="4,451.4 4,453.8 2.2,452.6" fill="#ef8306"/>
<rect x="6.4" y="451.2" width="222.5" height="2.8" fill="#ef8306" rx="1.4"/>
<polygon points="479.2,451.4 479.2,453.8 481,452.6" fill="#ef8306"/>
<rect x="484.3" y="452.2" width="45" height="0.8" fill="#55565e"/>
<rect x="510.3" y="450.6" width="2.1" height="4.1" fill="#ef8306" rx="0.6"/>
<rect x="532.2" y="31.4" width="167.8" height="423.6" fill="#2a2b33"/>
<rect x="531.6" y="31.2" width="168.4" height="0.8" fill="#3d3e46"/>
<text x="534.3" y="43.3" font-size="9" fill="#fff" font-weight="700" textLength="33" lengthAdjust="spacingAndGlyphs">プリセット</text>
<rect x="535" y="48" width="160.5" height="13.9" fill="#4d4d4f" rx="2"/>
<text x="538.2" y="57.8" font-size="7.7" fill="#fff" font-weight="500" textLength="42" lengthAdjust="spacingAndGlyphs">テンション高め</text>
<path d="M687.2 54.1 l2.4 2.5 l2.4 -2.5" fill="none" stroke="#fff" stroke-width="1"/>
<rect x="534" y="66.1" width="164" height="0.8" fill="#40414a"/>
<text x="534" y="78.4" font-size="9" fill="#fff" font-weight="700" textLength="74.6" lengthAdjust="spacingAndGlyphs">グローバルパラメータ</text>
<text x="549.3" y="90" font-size="6.6" fill="#fff" text-anchor="middle" textLength="18.7" lengthAdjust="spacingAndGlyphs">Speed</text>
<rect x="547.8" y="96" width="3" height="79" fill="#55565c" rx="1.5"/>
<rect x="547.8" y="132.3" width="3" height="42.7" fill="#c8761c" rx="1.5"/>
<circle cx="549.3" cy="132.3" r="3" fill="#f08c12"/>
<rect x="537.2" y="179.4" width="24.3" height="9.8" fill="#2e2f37" rx="0.8" stroke="#7a7a80" stroke-width="0.7"/>
<text x="549.3" y="186.9" font-size="6.5" fill="#fff" text-anchor="middle">1.04</text>
<text x="575.7" y="90" font-size="6.6" fill="#fff" text-anchor="middle" textLength="21.93" lengthAdjust="spacingAndGlyphs">Volume</text>
<rect x="574.2" y="96" width="3" height="79" fill="#55565c" rx="1.5"/>
<rect x="574.2" y="132.6" width="3" height="42.4" fill="#c8761c" rx="1.5"/>
<circle cx="575.7" cy="132.6" r="3" fill="#f08c12"/>
<rect x="563.6" y="179.4" width="24.3" height="9.8" fill="#2e2f37" rx="0.8" stroke="#7a7a80" stroke-width="0.7"/>
<text x="575.7" y="186.9" font-size="6.5" fill="#fff" text-anchor="middle">0.54</text>
<text x="602.1" y="90" font-size="6.6" fill="#fff" text-anchor="middle" textLength="14.38" lengthAdjust="spacingAndGlyphs">Pitch</text>
<rect x="600.6" y="96" width="3" height="79" fill="#55565c" rx="1.5"/>
<rect x="600.6" y="125.2" width="3" height="49.8" fill="#c8761c" rx="1.5"/>
<circle cx="602.1" cy="125.2" r="3" fill="#f08c12"/>
<rect x="590" y="179.4" width="24.3" height="9.8" fill="#2e2f37" rx="0.8" stroke="#7a7a80" stroke-width="0.7"/>
<text x="602.1" y="186.9" font-size="6.5" fill="#fff" text-anchor="middle">161.52</text>
<text x="628.5" y="90" font-size="6.6" fill="#fff" text-anchor="middle" textLength="16.54" lengthAdjust="spacingAndGlyphs">Alpha</text>
<rect x="627" y="96" width="3" height="79" fill="#55565c" rx="1.5"/>
<rect x="627" y="140" width="3" height="35" fill="#c8761c" rx="1.5"/>
<circle cx="628.5" cy="140" r="3" fill="#f08c12"/>
<rect x="616.4" y="179.4" width="24.3" height="9.8" fill="#2e2f37" rx="0.8" stroke="#7a7a80" stroke-width="0.7"/>
<text x="628.5" y="186.9" font-size="6.5" fill="#fff" text-anchor="middle">−0.12</text>
<text x="654.9" y="90" font-size="6.6" fill="#fff" text-anchor="middle" textLength="12.59" lengthAdjust="spacingAndGlyphs">Into.</text>
<rect x="653.4" y="96" width="3" height="79" fill="#55565c" rx="1.5"/>
<rect x="653.4" y="118.2" width="3" height="56.8" fill="#c8761c" rx="1.5"/>
<circle cx="654.9" cy="118.2" r="3" fill="#f08c12"/>
<rect x="642.8" y="179.4" width="24.3" height="9.8" fill="#2e2f37" rx="0.8" stroke="#7a7a80" stroke-width="0.7"/>
<text x="654.9" y="186.9" font-size="6.5" fill="#fff" text-anchor="middle">1.45</text>
<text x="681.3" y="90" font-size="6.6" fill="#fff" text-anchor="middle" textLength="17.97" lengthAdjust="spacingAndGlyphs">Husky</text>
<rect x="679.8" y="96" width="3" height="79" fill="#55565c" rx="1.5"/>
<rect x="679.8" y="140.3" width="3" height="34.7" fill="#c8761c" rx="1.5"/>
<circle cx="681.3" cy="140.3" r="3" fill="#f08c12"/>
<rect x="669.2" y="179.4" width="24.3" height="9.8" fill="#2e2f37" rx="0.8" stroke="#7a7a80" stroke-width="0.7"/>
<text x="681.3" y="186.9" font-size="6.5" fill="#fff" text-anchor="middle">−2.56</text>
<rect x="534" y="192.8" width="164" height="0.8" fill="#40414a"/>
<text x="534" y="205.6" font-size="9" fill="#fff" font-weight="700" textLength="28.6" lengthAdjust="spacingAndGlyphs">スタイル</text>
<path d="M624 212 V199.2 a2 2 0 0 1 2 -2 H649.7 a2 2 0 0 1 2 2 V212 Z" fill="#f08000"/>
<circle cx="637.9" cy="204.4" r="3.7" fill="none" stroke="#1a0e00" stroke-width="1.6"/>
<path d="M654 212 V199.2 a2 2 0 0 1 2 -2 H679.4 a2 2 0 0 1 2 2 V212 Z" fill="#4d4d4f"/>
<rect x="661.7" y="199.4" width="1.9" height="9.9" fill="#fff"/>
<rect x="665" y="199.4" width="1.9" height="9.9" fill="#fff"/>
<rect x="668.3" y="199.4" width="1.9" height="9.9" fill="#fff"/>
<rect x="671.6" y="199.4" width="1.9" height="9.9" fill="#fff"/>
<rect x="534" y="211.8" width="164" height="0.8" fill="#40414a"/>
<path d="M612.77 221.54 A44.1 44.1 0 0 1 619.3 221.6 L617.99 237.45 A28.2 28.2 0 0 0 613.81 237.41 Z" fill="#a5601c" stroke="#a5601c" stroke-width="0.3"/>
<path d="M619.3 221.6 A44.1 44.1 0 0 1 655.95 247.63 L641.42 254.09 A28.2 28.2 0 0 0 617.99 237.45 Z" fill="#f8992a" stroke="#f8992a" stroke-width="0.3"/>
<path d="M655.95 247.63 A44.1 44.1 0 0 1 658.15 253.79 L642.83 258.03 A28.2 28.2 0 0 0 641.42 254.09 Z" fill="#9c8b1f" stroke="#9c8b1f" stroke-width="0.3"/>
<path d="M658.15 253.79 A44.1 44.1 0 1 1 574.58 249.47 L589.39 255.27 A28.2 28.2 0 1 0 642.83 258.03 Z" fill="#e8d722" stroke="#e8d722" stroke-width="0.3"/>
<path d="M574.58 249.47 A44.1 44.1 0 0 1 577.41 243.58 L591.2 251.5 A28.2 28.2 0 0 0 589.39 255.27 Z" fill="#1f8a47" stroke="#1f8a47" stroke-width="0.3"/>
<path d="M577.41 243.58 A44.1 44.1 0 0 1 600.03 224.31 L605.66 239.18 A28.2 28.2 0 0 0 591.2 251.5 Z" fill="#2ed468" stroke="#2ed468" stroke-width="0.3"/>
<path d="M600.03 224.31 A44.1 44.1 0 0 1 606.29 222.45 L609.67 237.99 A28.2 28.2 0 0 0 605.66 239.18 Z" fill="#9c1c24" stroke="#9c1c24" stroke-width="0.3"/>
<path d="M606.29 222.45 A44.1 44.1 0 0 1 612.77 221.54 L613.81 237.41 A28.2 28.2 0 0 0 609.67 237.99 Z" fill="#6f3aa8" stroke="#6f3aa8" stroke-width="0.3"/>
<rect x="541.4" y="327.2" width="69.7" height="3.9" fill="#b5681e"/>
<text x="543.9" y="327.6" font-size="6.5" fill="#fff" textLength="21.31" lengthAdjust="spacingAndGlyphs">Normal</text>
<polygon points="621,322 621,328.6 616.9,325.3" fill="#e6e6e6"/>
<rect x="621.6" y="319.5" width="63.3" height="11.4" fill="#33343b" rx="1.5" stroke="#6c6c72" stroke-width="0.7"/>
<polygon points="685.4,322 685.4,328.6 689.5,325.3" fill="#e6e6e6"/>
<text x="653" y="328.5" font-size="6.5" fill="#fff" text-anchor="middle">19.3</text>
<rect x="541.4" y="341.5" width="69.7" height="3.9" fill="#a89418"/>
<text x="543.9" y="341.9" font-size="6.5" fill="#fff" textLength="18.79" lengthAdjust="spacingAndGlyphs">Happy</text>
<polygon points="621,336.3 621,342.9 616.9,339.6" fill="#e6e6e6"/>
<rect x="621.6" y="333.8" width="63.3" height="11.4" fill="#33343b" rx="1.5" stroke="#6c6c72" stroke-width="0.7"/>
<polygon points="685.4,336.3 685.4,342.9 689.5,339.6" fill="#e6e6e6"/>
<text x="653" y="342.8" font-size="6.5" fill="#fff" text-anchor="middle">68.3</text>
<rect x="541.4" y="355.8" width="69.7" height="3.9" fill="#1f9a48"/>
<text x="543.9" y="356.2" font-size="6.5" fill="#fff" textLength="22.76" lengthAdjust="spacingAndGlyphs">Bashful</text>
<polygon points="621,350.6 621,357.2 616.9,353.9" fill="#e6e6e6"/>
<rect x="621.6" y="348.1" width="63.3" height="11.4" fill="#33343b" rx="1.5" stroke="#6c6c72" stroke-width="0.7"/>
<polygon points="685.4,350.6 685.4,357.2 689.5,353.9" fill="#e6e6e6"/>
<text x="653" y="357.1" font-size="6.5" fill="#fff" text-anchor="middle">12.4</text>
<rect x="541.4" y="370.1" width="69.7" height="3.9" fill="#8f181e"/>
<text x="543.9" y="370.5" font-size="6.5" fill="#fff" textLength="18.43" lengthAdjust="spacingAndGlyphs">Angry</text>
<polygon points="621,364.9 621,371.5 616.9,368.2" fill="#e6e6e6"/>
<rect x="621.6" y="362.4" width="63.3" height="11.4" fill="#33343b" rx="1.5" stroke="#6c6c72" stroke-width="0.7"/>
<polygon points="685.4,364.9 685.4,371.5 689.5,368.2" fill="#e6e6e6"/>
<text x="653" y="371.4" font-size="6.5" fill="#fff" text-anchor="middle">0.0</text>
<rect x="541.4" y="384.4" width="69.7" height="3.9" fill="#6a35b0"/>
<text x="543.9" y="384.8" font-size="6.5" fill="#fff" textLength="11.56" lengthAdjust="spacingAndGlyphs">Sad</text>
<polygon points="621,379.2 621,385.8 616.9,382.5" fill="#e6e6e6"/>
<rect x="621.6" y="376.7" width="63.3" height="11.4" fill="#33343b" rx="1.5" stroke="#6c6c72" stroke-width="0.7"/>
<polygon points="685.4,379.2 685.4,385.8 689.5,382.5" fill="#e6e6e6"/>
<text x="653" y="385.7" font-size="6.5" fill="#fff" text-anchor="middle">0.0</text>
<line x1="699.8" y1="449.6" x2="694.6" y2="454.8" stroke="#8a8a90" stroke-width="0.6"/>
<line x1="699.8" y1="451.3" x2="696.3" y2="454.8" stroke="#8a8a90" stroke-width="0.6"/>
<line x1="699.8" y1="453" x2="698" y2="454.8" stroke="#8a8a90" stroke-width="0.6"/>
</svg>
</body></html>
